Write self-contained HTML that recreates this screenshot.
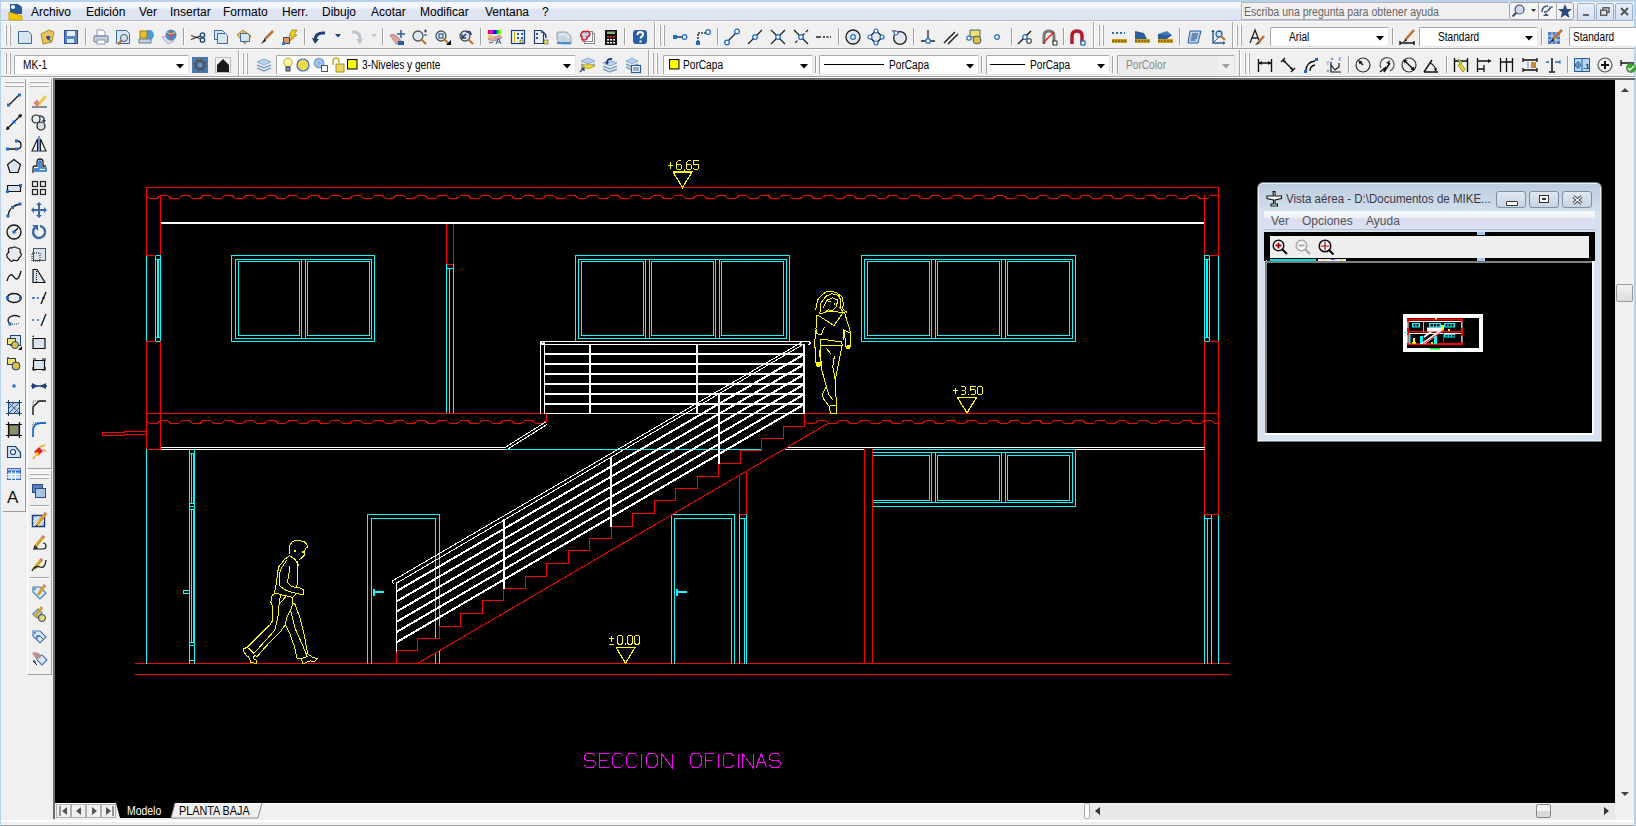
<!DOCTYPE html>
<html><head><meta charset="utf-8"><style>
html,body{margin:0;padding:0;width:1636px;height:826px;overflow:hidden;background:#f0f0f0;font-family:"Liberation Sans", sans-serif;}
#root{position:relative;width:1636px;height:826px;overflow:hidden;}
svg{overflow:visible}
</style></head><body><div id="root">
<div style="position:absolute;left:0px;top:0px;width:1636px;height:2px;background:#b9d1ea"></div><div style="position:absolute;left:0px;top:0px;width:1px;height:826px;background:#b9d1ea"></div><div style="position:absolute;left:1634px;top:0px;width:2px;height:826px;background:#b9d1ea"></div><div style="position:absolute;left:1px;top:2px;width:1633px;height:18px;background:linear-gradient(#f6f8fc 0px,#f1f4fa 6px,#dde3f2 8px,#dfe5f4 18px)"></div><div style="position:absolute;left:1px;top:20px;width:1633px;height:1px;background:#b8c0d4"></div><div style="position:absolute;left:1px;top:21px;width:1633px;height:1px;background:#fbfbfb"></div><svg style="position:absolute;left:9px;top:3px" width="16" height="17" viewBox="0 0 16 17"><path d="M1 1h8l4 3v7H1z" fill="#2a5a98"/><circle cx="4" cy="4" r="2" fill="#fff"/><path d="M0 9l13 4v4H0z" fill="#f2c800" stroke="#d09800" stroke-width=".8"/></svg><div style="position:absolute;left:31px;top:6px;font-size:12px;color:#000;white-space:nowrap;line-height:1;">Archivo</div><div style="position:absolute;left:86px;top:6px;font-size:12px;color:#000;white-space:nowrap;line-height:1;">Edición</div><div style="position:absolute;left:139px;top:6px;font-size:12px;color:#000;white-space:nowrap;line-height:1;">Ver</div><div style="position:absolute;left:170px;top:6px;font-size:12px;color:#000;white-space:nowrap;line-height:1;">Insertar</div><div style="position:absolute;left:223px;top:6px;font-size:12px;color:#000;white-space:nowrap;line-height:1;">Formato</div><div style="position:absolute;left:282px;top:6px;font-size:12px;color:#000;white-space:nowrap;line-height:1;">Herr.</div><div style="position:absolute;left:322px;top:6px;font-size:12px;color:#000;white-space:nowrap;line-height:1;">Dibujo</div><div style="position:absolute;left:371px;top:6px;font-size:12px;color:#000;white-space:nowrap;line-height:1;">Acotar</div><div style="position:absolute;left:420px;top:6px;font-size:12px;color:#000;white-space:nowrap;line-height:1;">Modificar</div><div style="position:absolute;left:485px;top:6px;font-size:12px;color:#000;white-space:nowrap;line-height:1;">Ventana</div><div style="position:absolute;left:542px;top:6px;font-size:12px;color:#000;white-space:nowrap;line-height:1;">?</div><div style="position:absolute;left:1241px;top:2px;width:268px;height:18px;background:#f0f0f0;border:1px solid #b4b4b4;border-right:none;box-sizing:border-box"></div><div style="position:absolute;left:1244px;top:6px;font-size:12px;color:#666;white-space:nowrap;line-height:1;transform:scaleX(0.88);transform-origin:0 0;">Escriba una pregunta para obtener ayuda</div><div style="position:absolute;left:1509px;top:2px;width:65px;height:18px;background:#f4f4f4;border:1px solid #a4a4a4;border-radius:3px;box-sizing:border-box"></div><div style="position:absolute;left:1538px;top:3px;width:1px;height:16px;background:#b0b0b0"></div><div style="position:absolute;left:1556px;top:3px;width:1px;height:16px;background:#b0b0b0"></div><svg style="position:absolute;left:1511px;top:4px" width="14" height="14" viewBox="0 0 14 14"><circle cx="8.5" cy="5.5" r="4.5" fill="#d0d8ec" stroke="#3a5080" stroke-width="1.2"/><path d="M5.5 8.5L1.5 12.5" stroke="#3a5080" stroke-width="2.2"/></svg><svg style="position:absolute;left:1531px;top:9px" width="5" height="3" viewBox="0 0 5 3"><path d="M0 0h5l-2.5 3z" fill="#333"/></svg><svg style="position:absolute;left:1540px;top:4px" width="14" height="14" viewBox="0 0 14 14"><path d="M3 12l3-3 3 3z" fill="#3a5080"/><path d="M2 8q0-6 6-6M4 8q4 0 6-4" stroke="#3a5080" stroke-width="1.5" fill="none"/><path d="M9 3l4 0M9 6l3-3" stroke="#3a5080"/></svg><svg style="position:absolute;left:1558px;top:4px" width="14" height="14" viewBox="0 0 14 14"><path d="M7 0l2 5h5l-4 3.5 1.5 5.5L7 11l-4.5 3L4 8.5 0 5h5z" fill="#2a4a80"/></svg><div style="position:absolute;left:1577px;top:3px;width:18px;height:18px;background:linear-gradient(#e8eef8,#d4dff0);border:1px solid #9eaec4;border-radius:2px;box-sizing:border-box"></div><div style="position:absolute;left:1583px;top:14px;width:6px;height:2px;background:#666"></div><div style="position:absolute;left:1596px;top:3px;width:18px;height:18px;background:linear-gradient(#e8eef8,#d4dff0);border:1px solid #9eaec4;border-radius:2px;box-sizing:border-box"></div><svg style="position:absolute;left:1600px;top:7px" width="10" height="10" viewBox="0 0 10 10"><rect x="3" y="0.8" width="6" height="4.5" fill="none" stroke="#555" stroke-width="1.4"/><rect x="0.7" y="3.2" width="6" height="5" fill="#e0e6f2" stroke="#555" stroke-width="1.4"/></svg><div style="position:absolute;left:1615px;top:3px;width:18px;height:18px;background:linear-gradient(#e8eef8,#d4dff0);border:1px solid #9eaec4;border-radius:2px;box-sizing:border-box"></div><svg style="position:absolute;left:1620px;top:7px" width="9" height="9" viewBox="0 0 9 9"><path d="M1 1l7 7M8 1L1 8" stroke="#555" stroke-width="2"/></svg><div style="position:absolute;left:1px;top:22px;width:1633px;height:27px;background:#f0f0f0"></div><div style="position:absolute;left:1px;top:48px;width:1633px;height:1px;background:#a0a0a0"></div><div style="position:absolute;left:1px;top:49px;width:1633px;height:1px;background:#fbfbfb"></div><div style="position:absolute;left:1px;top:50px;width:1633px;height:27px;background:#f0f0f0"></div><div style="position:absolute;left:1px;top:76px;width:1633px;height:1px;background:#a0a0a0"></div><div style="position:absolute;left:1px;top:77px;width:1633px;height:1px;background:#fbfbfb"></div><div style="position:absolute;left:654px;top:22px;width:1px;height:26px;background:#a8a8a8"></div><div style="position:absolute;left:655px;top:22px;width:1px;height:26px;background:#fff"></div><div style="position:absolute;left:1093px;top:22px;width:1px;height:26px;background:#a8a8a8"></div><div style="position:absolute;left:1094px;top:22px;width:1px;height:26px;background:#fff"></div><div style="position:absolute;left:1232px;top:22px;width:1px;height:26px;background:#a8a8a8"></div><div style="position:absolute;left:1233px;top:22px;width:1px;height:26px;background:#fff"></div><div style="position:absolute;left:5px;top:25px;width:1px;height:21px;background:#ffffff"></div><div style="position:absolute;left:6px;top:25px;width:1px;height:21px;background:#a8a8a8"></div><div style="position:absolute;left:9px;top:25px;width:1px;height:21px;background:#ffffff"></div><div style="position:absolute;left:10px;top:25px;width:1px;height:21px;background:#a8a8a8"></div><div style="position:absolute;left:659px;top:25px;width:1px;height:21px;background:#ffffff"></div><div style="position:absolute;left:660px;top:25px;width:1px;height:21px;background:#a8a8a8"></div><div style="position:absolute;left:663px;top:25px;width:1px;height:21px;background:#ffffff"></div><div style="position:absolute;left:664px;top:25px;width:1px;height:21px;background:#a8a8a8"></div><div style="position:absolute;left:1098px;top:25px;width:1px;height:21px;background:#ffffff"></div><div style="position:absolute;left:1099px;top:25px;width:1px;height:21px;background:#a8a8a8"></div><div style="position:absolute;left:1102px;top:25px;width:1px;height:21px;background:#ffffff"></div><div style="position:absolute;left:1103px;top:25px;width:1px;height:21px;background:#a8a8a8"></div><div style="position:absolute;left:1236px;top:25px;width:1px;height:21px;background:#ffffff"></div><div style="position:absolute;left:1237px;top:25px;width:1px;height:21px;background:#a8a8a8"></div><div style="position:absolute;left:1240px;top:25px;width:1px;height:21px;background:#ffffff"></div><div style="position:absolute;left:1241px;top:25px;width:1px;height:21px;background:#a8a8a8"></div><svg style="position:absolute;left:17px;top:29px" width="16" height="16" viewBox="0 0 16 16"><path d="M1.5 2.5h10l3 3v9h-13z" fill="#d7e6ef" stroke="#3a6aa8"/></svg><svg style="position:absolute;left:40px;top:29px" width="16" height="16" viewBox="0 0 16 16"><path d="M1 5l8-4 5 2-2 10-9 2z" fill="#e8c45a" stroke="#b08a2a"/><path d="M6 8q3-3 5 1l-2 0 2 4-4-3z" fill="#244a86"/></svg><svg style="position:absolute;left:63px;top:29px" width="16" height="16" viewBox="0 0 16 16"><rect x="1.5" y="1.5" width="13" height="13" fill="#5b86c6" stroke="#2a4f90"/><rect x="4" y="2" width="8" height="5" fill="#e8eef8"/><rect x="4" y="10" width="7" height="4" fill="#dde6f2"/></svg><div style="position:absolute;left:85px;top:28px;width:1px;height:17px;background:#a0a0a0"></div><div style="position:absolute;left:86px;top:28px;width:1px;height:17px;background:#ffffff"></div><svg style="position:absolute;left:93px;top:29px" width="16" height="16" viewBox="0 0 16 16"><path d="M4 1h6l2 2v4H4z" fill="#fff" stroke="#8894b0"/><path d="M1 7h14v6H1z" fill="#c8d0e4" stroke="#6d7aa0"/><rect x="4" y="11" width="8" height="4" fill="#fff" stroke="#8894b0"/></svg><svg style="position:absolute;left:115px;top:29px" width="16" height="16" viewBox="0 0 16 16"><path d="M1.5 1.5h10l3 3v10h-13z" fill="#d7e6ef" stroke="#3a6aa8"/><circle cx="9" cy="9" r="3.5" fill="#cfe0f4" stroke="#556"/><path d="M6.5 11.5L3 15.5" stroke="#b07020" stroke-width="2"/></svg><svg style="position:absolute;left:138px;top:29px" width="16" height="16" viewBox="0 0 16 16"><circle cx="11" cy="6" r="5" fill="#4a9ad8"/><path d="M1 10h12v4H1z" fill="#c8d0e4" stroke="#6d7aa0"/><rect x="2" y="2" width="7" height="7" fill="#e0c030" stroke="#a08010"/></svg><svg style="position:absolute;left:161px;top:29px" width="16" height="16" viewBox="0 0 16 16"><path d="M1 8l6 7 6-3-6-5z" fill="#dde" stroke="#aab"/><circle cx="10" cy="6" r="5.5" fill="#3d8fd8"/><path d="M5 6h10M10 1v10" stroke="#e04040" stroke-width="1.2"/><path d="M6 3q4 4 8 0" stroke="#f0d020" fill="none"/></svg><div style="position:absolute;left:183px;top:28px;width:1px;height:17px;background:#a0a0a0"></div><div style="position:absolute;left:184px;top:28px;width:1px;height:17px;background:#ffffff"></div><svg style="position:absolute;left:190px;top:29px" width="16" height="16" viewBox="0 0 16 16"><path d="M1 6.5L10 9.5M1 10.5L10 7" stroke="#333" stroke-width="1.3"/><circle cx="12.5" cy="6" r="2.2" fill="none" stroke="#1f3f77" stroke-width="1.3"/><circle cx="12.5" cy="11" r="2.2" fill="none" stroke="#1f3f77" stroke-width="1.3"/></svg><svg style="position:absolute;left:213px;top:29px" width="16" height="16" viewBox="0 0 16 16"><path d="M1.5 1.5h8l2 2v7h-10z" fill="#d7e6ef" stroke="#3a6aa8"/><path d="M4.5 4.5h8l2 2v8h-10z" fill="#d7e6ef" stroke="#3a6aa8"/></svg><svg style="position:absolute;left:236px;top:29px" width="16" height="16" viewBox="0 0 16 16"><path d="M1 6l6-5 8 6-6 8z" fill="#e8c45a" stroke="#b08a2a"/><path d="M4.5 4.5h7l2 2v6h-9z" fill="#d7e6ef" stroke="#3a6aa8"/></svg><svg style="position:absolute;left:259px;top:29px" width="16" height="16" viewBox="0 0 16 16"><path d="M14 2L6 10" stroke="#c07030" stroke-width="2.5"/><path d="M6 9l-4 6 5-3z" fill="#222"/></svg><svg style="position:absolute;left:282px;top:29px" width="16" height="16" viewBox="0 0 16 16"><path d="M10 1l5 0-3 5h3l-7 6 2-5h-3z" fill="#f0d020" stroke="#806000" stroke-width=".6"/><rect x="1.5" y="8.5" width="6" height="6" fill="#f09050" stroke="#2a4f90"/><rect x="0" y="13" width="3" height="3" fill="#2a7ad8"/></svg><div style="position:absolute;left:304px;top:28px;width:1px;height:17px;background:#a0a0a0"></div><div style="position:absolute;left:305px;top:28px;width:1px;height:17px;background:#ffffff"></div><svg style="position:absolute;left:312px;top:29px" width="16" height="16" viewBox="0 0 16 16"><path d="M3 12q0-9 10-8" fill="none" stroke="#1f3f77" stroke-width="3"/><path d="M0 9l3 6 4-5z" fill="#1f3f77"/></svg><svg style="position:absolute;left:348px;top:29px" width="16" height="16" viewBox="0 0 16 16"><path d="M4 3q9-1 8 9" fill="none" stroke="#bcc4cc" stroke-width="3"/><path d="M8 10l4 5 3-5z" fill="#bcc4cc"/></svg><div style="position:absolute;left:382px;top:28px;width:1px;height:17px;background:#a0a0a0"></div><div style="position:absolute;left:383px;top:28px;width:1px;height:17px;background:#ffffff"></div><svg style="position:absolute;left:389px;top:29px" width="16" height="16" viewBox="0 0 16 16"><path d="M1 6q4-2 8 2l3 4-2 3H7z" fill="#d8a8a0" stroke="#a06060" stroke-width=".6"/><rect x="9" y="12" width="6" height="4" fill="#2a5a9a"/><path d="M12 1v8M8 5h8" stroke="#2a5a9a" stroke-width="1.5"/></svg><svg style="position:absolute;left:412px;top:29px" width="16" height="16" viewBox="0 0 16 16"><circle cx="6" cy="7" r="5" fill="#dbe8f4" stroke="#555" stroke-width="1.3"/><path d="M9 10l5 5" stroke="#c07020" stroke-width="2"/><path d="M12 2h3M13.5 .5v3M12 6h3" stroke="#1f3f77"/></svg><svg style="position:absolute;left:435px;top:29px" width="16" height="16" viewBox="0 0 16 16"><circle cx="6" cy="7" r="5" fill="#dbe8f4" stroke="#555" stroke-width="1.3"/><rect x="4" y="5" width="4" height="4" fill="none" stroke="#1f3f77"/><path d="M9 10l4 4" stroke="#c07020" stroke-width="2"/><path d="M11 16l5-5v5z" fill="#000"/></svg><svg style="position:absolute;left:458px;top:29px" width="16" height="16" viewBox="0 0 16 16"><circle cx="7" cy="7" r="5" fill="#dbe8f4" stroke="#555" stroke-width="1.3"/><path d="M10 10l5 5" stroke="#c07020" stroke-width="2"/><path d="M4 9l4-4M4 5v4h4" stroke="#1f3f77" stroke-width="1.5" fill="none"/><path d="M8 3q5-2 5 3" stroke="#1f3f77" stroke-width="1.5" fill="none"/></svg><div style="position:absolute;left:480px;top:28px;width:1px;height:17px;background:#a0a0a0"></div><div style="position:absolute;left:481px;top:28px;width:1px;height:17px;background:#ffffff"></div><svg style="position:absolute;left:487px;top:29px" width="16" height="16" viewBox="0 0 16 16"><defs><linearGradient id="rbw"><stop offset="0" stop-color="#f00"/><stop offset=".25" stop-color="#f0f"/><stop offset=".5" stop-color="#00f"/><stop offset=".75" stop-color="#0f0"/><stop offset="1" stop-color="#ff0"/></linearGradient></defs><rect x="1" y="1" width="14" height="4" fill="url(#rbw)"/><path d="M1 8h6l6-2 2 3-7 3-6-1z" fill="#d8a8a0" stroke="#906060" stroke-width=".5"/><path d="M2 13q2 2 4 0M9 15l2.5-6 2.5 6M10 13h3" stroke="#2a5a9a" fill="none"/><rect x="1" y="6" width="5" height="3" fill="#e8d070"/></svg><svg style="position:absolute;left:510px;top:29px" width="16" height="16" viewBox="0 0 16 16"><rect x="1.5" y="1.5" width="13" height="13" fill="#eef2f8" stroke="#1f3f77" stroke-width="1.2"/><rect x="4" y="3" width="1" height="10" fill="#c8a800"/><rect x="7" y="4" width="2" height="2" fill="#2a5a9a"/><rect x="11" y="4" width="2" height="2" fill="#2a5a9a"/><rect x="7" y="8" width="2" height="2" fill="#2a5a9a"/><rect x="11" y="8" width="2" height="2" fill="#2a5a9a"/><rect x="10" y="11" width="3" height="3" fill="#f0e040" stroke="#1f3f77" stroke-width=".5"/></svg><svg style="position:absolute;left:533px;top:29px" width="16" height="16" viewBox="0 0 16 16"><path d="M1.5 1.5h7l2 2v11h-9z" fill="#eef2f8" stroke="#1f3f77" stroke-width="1.2"/><rect x="3" y="4" width="2" height="2" fill="#2a5a9a"/><rect x="3" y="8" width="2" height="2" fill="#2a5a9a"/><path d="M8 3q5 0 5 6" stroke="#1f3f77" stroke-width="1.5" fill="none"/><rect x="11" y="11" width="4" height="4" fill="#f0e040" stroke="#1f3f77" stroke-width=".5"/></svg><svg style="position:absolute;left:556px;top:29px" width="16" height="16" viewBox="0 0 16 16"><path d="M1 3h10l4 4v8H5l-4-4z" fill="#c8d4de" stroke="#9aa8b4"/><path d="M3 6q6-3 10 3" stroke="#fff" fill="none"/><path d="M1 14h14" stroke="#4a90c8" stroke-width="2"/></svg><svg style="position:absolute;left:580px;top:29px" width="16" height="16" viewBox="0 0 16 16"><rect x="4.5" y="4.5" width="10" height="10" fill="#fff" stroke="#888"/><rect x="2.5" y="2.5" width="10" height="10" fill="#fff" stroke="#888"/><path d="M1 5q2-4 5-2 3-2 4 2-1 3-3 3 1 3-3 3-3 0-2-3-2-1-1-3z" fill="#b8d0ec" stroke="#e02020" stroke-width="1.5"/></svg><svg style="position:absolute;left:603px;top:29px" width="16" height="16" viewBox="0 0 16 16"><rect x="2" y="1" width="12" height="15" fill="#111"/><rect x="4" y="2.5" width="8" height="2.5" fill="#8ab07a"/><g fill="#fff"><rect x="4" y="7" width="2" height="1.5" fill="#e33"/><rect x="7" y="7" width="2" height="1.5" fill="#e33"/><rect x="10" y="7" width="2" height="1.5" fill="#e33"/><rect x="4" y="10" width="2" height="1.5"/><rect x="7" y="10" width="2" height="1.5"/><rect x="10" y="10" width="2" height="1.5"/><rect x="4" y="13" width="2" height="1.5"/><rect x="7" y="13" width="2" height="1.5"/><rect x="10" y="13" width="2" height="1.5"/></g></svg><div style="position:absolute;left:624px;top:28px;width:1px;height:17px;background:#a0a0a0"></div><div style="position:absolute;left:625px;top:28px;width:1px;height:17px;background:#ffffff"></div><svg style="position:absolute;left:632px;top:29px" width="16" height="16" viewBox="0 0 16 16"><rect x="1" y="1" width="14" height="14" rx="3" fill="#2a5fa8"/><path d="M5.5 6q0-3 2.7-3 2.8 0 2.8 2.5c0 2-2.5 2-2.5 4" stroke="#fff" stroke-width="2" fill="none"/><rect x="7.5" y="11.5" width="2" height="2" fill="#fff"/></svg><svg style="position:absolute;left:672px;top:29px" width="16" height="16" viewBox="0 0 16 16"><path d="M2 8h10" stroke="#333" stroke-width="1.5"/><rect x="1" y="6" width="4" height="4" fill="#1e6cc8"/><circle cx="12.5" cy="8" r="2.3" fill="#fff" stroke="#1e6cc8" stroke-width="1.3"/></svg><svg style="position:absolute;left:695px;top:29px" width="16" height="16" viewBox="0 0 16 16"><path d="M3 13V4h9" stroke="#333" stroke-width="1.5" stroke-dasharray="2 1" fill="none"/><rect x="1" y="12" width="4" height="4" fill="#1e6cc8"/><circle cx="13" cy="3" r="2.3" fill="#fff" stroke="#1e6cc8" stroke-width="1.3"/></svg><div style="position:absolute;left:717px;top:28px;width:1px;height:17px;background:#a0a0a0"></div><div style="position:absolute;left:718px;top:28px;width:1px;height:17px;background:#ffffff"></div><svg style="position:absolute;left:724px;top:29px" width="16" height="16" viewBox="0 0 16 16"><path d="M3 13L13 3" stroke="#222" stroke-width="1.3"/><circle cx="13" cy="2.5" r="2.3" fill="#fff" stroke="#1e6cc8" stroke-width="1.3"/><circle cx="3" cy="13.5" r="2.3" fill="#fff" stroke="#1e6cc8" stroke-width="1.3"/></svg><svg style="position:absolute;left:747px;top:29px" width="16" height="16" viewBox="0 0 16 16"><path d="M1 15L15 1" stroke="#222" stroke-width="1.3"/><circle cx="8" cy="8" r="2.3" fill="#fff" stroke="#1e6cc8" stroke-width="1.3"/></svg><svg style="position:absolute;left:770px;top:29px" width="16" height="16" viewBox="0 0 16 16"><path d="M1 1L15 15M15 1L1 15" stroke="#222" stroke-width="1.3"/><circle cx="8" cy="8" r="2.3" fill="#fff" stroke="#1e6cc8" stroke-width="1.3"/></svg><svg style="position:absolute;left:793px;top:29px" width="16" height="16" viewBox="0 0 16 16"><path d="M1 1L15 15" stroke="#222" stroke-width="1.3"/><path d="M15 1L1 15" stroke="#222" stroke-width="1.3" stroke-dasharray="3 2"/><circle cx="8" cy="8" r="2.3" fill="#fff" stroke="#1e6cc8" stroke-width="1.3"/></svg><svg style="position:absolute;left:815px;top:29px" width="16" height="16" viewBox="0 0 16 16"><path d="M1 8h5" stroke="#222" stroke-width="1.5"/><path d="M8 8h8" stroke="#222" stroke-width="1.5" stroke-dasharray="2 1.5"/></svg><div style="position:absolute;left:838px;top:28px;width:1px;height:17px;background:#a0a0a0"></div><div style="position:absolute;left:839px;top:28px;width:1px;height:17px;background:#ffffff"></div><svg style="position:absolute;left:845px;top:29px" width="16" height="16" viewBox="0 0 16 16"><circle cx="8" cy="8" r="7" fill="#e2e8f0" stroke="#222" stroke-width="1.3"/><circle cx="8" cy="8" r="2.3" fill="#fff" stroke="#1e6cc8" stroke-width="1.3"/></svg><svg style="position:absolute;left:868px;top:29px" width="16" height="16" viewBox="0 0 16 16"><path d="M8 1.5L14.5 8 8 14.5 1.5 8z" fill="#e2e8f0" stroke="#222" stroke-width="1.3"/><g fill="#fff" stroke="#1e6cc8" stroke-width="1.2"><circle cx="8" cy="2" r="2"/><circle cx="2" cy="8" r="2"/><circle cx="14" cy="8" r="2"/><circle cx="8" cy="14" r="2"/></g></svg><svg style="position:absolute;left:891px;top:29px" width="16" height="16" viewBox="0 0 16 16"><circle cx="9" cy="9" r="6.3" fill="#e2e8f0" stroke="#222" stroke-width="1.3"/><path d="M1 2l4 0" stroke="#222"/><circle cx="5" cy="4" r="2" fill="#fff" stroke="#1e6cc8" stroke-width="1.2"/></svg><div style="position:absolute;left:913px;top:28px;width:1px;height:17px;background:#a0a0a0"></div><div style="position:absolute;left:914px;top:28px;width:1px;height:17px;background:#ffffff"></div><svg style="position:absolute;left:920px;top:29px" width="16" height="16" viewBox="0 0 16 16"><path d="M1 12h14M8 1v11" stroke="#222" stroke-width="1.3"/><circle cx="8" cy="12" r="2.3" fill="#fff" stroke="#1e6cc8" stroke-width="1.3"/></svg><svg style="position:absolute;left:943px;top:29px" width="16" height="16" viewBox="0 0 16 16"><path d="M1 14L12 3M5 15L15 5" stroke="#222" stroke-width="1.5"/></svg><svg style="position:absolute;left:966px;top:29px" width="16" height="16" viewBox="0 0 16 16"><path d="M4 1h10v7H4z" fill="#f0e070" stroke="#1f3f77" stroke-width=".8"/><circle cx="11" cy="11" r="4" fill="#e0c040" stroke="#1f3f77" stroke-width=".8"/><circle cx="3" cy="9" r="2.2" fill="#fff" stroke="#1e6cc8" stroke-width="1.2"/></svg><svg style="position:absolute;left:989px;top:29px" width="16" height="16" viewBox="0 0 16 16"><circle cx="8" cy="8" r="2.3" fill="#fff" stroke="#1e6cc8" stroke-width="1.3"/></svg><div style="position:absolute;left:1011px;top:28px;width:1px;height:17px;background:#a0a0a0"></div><div style="position:absolute;left:1012px;top:28px;width:1px;height:17px;background:#ffffff"></div><svg style="position:absolute;left:1017px;top:29px" width="16" height="16" viewBox="0 0 16 16"><path d="M1 15L14 2" stroke="#222" stroke-width="1.5"/><circle cx="8" cy="8" r="2.3" fill="#fff" stroke="#1e6cc8" stroke-width="1.3"/><circle cx="12" cy="12" r="2.3" fill="#fff" stroke="#555" stroke-width="1.3"/></svg><svg style="position:absolute;left:1041px;top:29px" width="16" height="16" viewBox="0 0 16 16"><path d="M3 15V7q0-5 5-5t5 5v8" stroke="#777" stroke-width="3" fill="none"/><path d="M2 14L13 3" stroke="#e02020" stroke-width="1.5"/><rect x="12" y="12" width="4" height="4" fill="#fff" stroke="#333"/></svg><div style="position:absolute;left:1063px;top:28px;width:1px;height:17px;background:#a0a0a0"></div><div style="position:absolute;left:1064px;top:28px;width:1px;height:17px;background:#ffffff"></div><svg style="position:absolute;left:1069px;top:29px" width="16" height="16" viewBox="0 0 16 16"><path d="M3 15V7q0-5 5-5t5 5v8" stroke="#b01c2c" stroke-width="3.5" fill="none"/><rect x="12" y="12" width="4" height="4" fill="#fff" stroke="#1e6cc8" stroke-width="1.2"/></svg><svg style="position:absolute;left:1111px;top:29px" width="16" height="16" viewBox="0 0 16 16"><path d="M1 4h13" stroke="#1e6cc8" stroke-width="2" stroke-dasharray="2 2"/><rect x="1" y="10" width="15" height="4" fill="#c8a018"/><path d="M2 11v2M5 11v2M8 11v2M11 11v2M14 11v2" stroke="#604000"/></svg><svg style="position:absolute;left:1134px;top:29px" width="16" height="16" viewBox="0 0 16 16"><path d="M1 2l9 2 3 6H1z" fill="#2a5f9a"/><rect x="1" y="10" width="15" height="4" fill="#c8a018"/><path d="M2 11v2M5 11v2M8 11v2M11 11v2M14 11v2" stroke="#604000"/></svg><svg style="position:absolute;left:1157px;top:29px" width="16" height="16" viewBox="0 0 16 16"><path d="M1 5l9-3 5 4-5 3H1z" fill="#4a80c0"/><path d="M1 5v5h9l5-4" fill="#2a5f9a"/><rect x="1" y="10" width="15" height="4" fill="#c8a018"/><path d="M2 11v2M5 11v2M8 11v2M11 11v2M14 11v2" stroke="#604000"/></svg><div style="position:absolute;left:1179px;top:28px;width:1px;height:17px;background:#a0a0a0"></div><div style="position:absolute;left:1180px;top:28px;width:1px;height:17px;background:#ffffff"></div><svg style="position:absolute;left:1187px;top:29px" width="16" height="16" viewBox="0 0 16 16"><path d="M3 2h11l-3 12H1z" fill="#b8d4f0" stroke="#2a5f9a"/><path d="M5 5h6M4.5 7h6M4 9h6M3.5 11h5" stroke="#1f3f77"/></svg><svg style="position:absolute;left:1210px;top:29px" width="16" height="16" viewBox="0 0 16 16"><path d="M3 1v13h12" stroke="#2a5f9a" stroke-width="1.5" fill="none"/><path d="M1 3l2-2 2 2M13 12l2 2-2 2" fill="#2a5f9a"/><circle cx="9" cy="5" r="3" fill="#d0e0f0" stroke="#2a5f9a" stroke-width="1.3"/><path d="M11 7l4 4" stroke="#c07020" stroke-width="2"/><path d="M3 14L9 8" stroke="#2a5f9a"/></svg><svg style="position:absolute;left:335px;top:34px" width="6" height="4" viewBox="0 0 6 4"><path d="M0 0h6l-3 3.5z" fill="#1f3f77"/></svg><svg style="position:absolute;left:371px;top:34px" width="6" height="4" viewBox="0 0 6 4"><path d="M0 0h6l-3 3.5z" fill="#c0c8d0"/></svg><svg style="position:absolute;left:1249px;top:29px" width="16" height="16" viewBox="0 0 16 16"><path d="M1 14L6 1l5 13M3 9h6" stroke="#222" stroke-width="1.3" fill="none"/><path d="M15 7l-6 7" stroke="#c07030" stroke-width="2.5"/><path d="M9 13l-3 3 4-1z" fill="#222"/></svg><div style="position:absolute;left:1270px;top:27px;width:119px;height:20px;background:#fff;border:1px solid #a8a8a8;border-radius:2px;box-sizing:border-box;border-bottom-color:#e4e4e4;border-right-color:#e4e4e4"></div><svg style="position:absolute;left:1376px;top:36px" width="8" height="5" viewBox="0 0 8 5"><path d="M0 0h8l-4 4.5z" fill="#000"/></svg><div style="position:absolute;left:1289px;top:31px;font-size:12px;color:#000;white-space:nowrap;line-height:1;transform:scaleX(0.845);transform-origin:0 0;">Arial</div><div style="position:absolute;left:1392px;top:28px;width:1px;height:17px;background:#a0a0a0"></div><div style="position:absolute;left:1393px;top:28px;width:1px;height:17px;background:#ffffff"></div><svg style="position:absolute;left:1399px;top:29px" width="16" height="16" viewBox="0 0 16 16"><path d="M15 1L7 10" stroke="#c07030" stroke-width="2.5"/><path d="M7 9l-3 4 4-1z" fill="#222"/><path d="M1 14h14M1 12v4M15 12v4" stroke="#111" stroke-width="1.4"/></svg><div style="position:absolute;left:1419px;top:27px;width:119px;height:20px;background:#fff;border:1px solid #a8a8a8;border-radius:2px;box-sizing:border-box;border-bottom-color:#e4e4e4;border-right-color:#e4e4e4"></div><svg style="position:absolute;left:1525px;top:36px" width="8" height="5" viewBox="0 0 8 5"><path d="M0 0h8l-4 4.5z" fill="#000"/></svg><div style="position:absolute;left:1438px;top:31px;font-size:12px;color:#000;white-space:nowrap;line-height:1;transform:scaleX(0.845);transform-origin:0 0;">Standard</div><div style="position:absolute;left:1541px;top:28px;width:1px;height:17px;background:#a0a0a0"></div><div style="position:absolute;left:1542px;top:28px;width:1px;height:17px;background:#ffffff"></div><svg style="position:absolute;left:1547px;top:29px" width="16" height="16" viewBox="0 0 16 16"><rect x="1" y="3" width="12" height="12" fill="#4a80c8"/><path d="M1 7h12M1 11h12M5 3v12M9 3v12" stroke="#cfe0f4"/><path d="M15 1L6 10" stroke="#c07030" stroke-width="2.5"/><path d="M6 9l-3 4 4-1z" fill="#222"/></svg><div style="position:absolute;left:1569px;top:27px;width:71px;height:20px;background:#fff;border:1px solid #a8a8a8;border-radius:2px;box-sizing:border-box;border-bottom-color:#e4e4e4;border-right-color:#e4e4e4"></div><div style="position:absolute;left:1573px;top:31px;font-size:12px;color:#000;white-space:nowrap;line-height:1;transform:scaleX(0.845);transform-origin:0 0;">Standard</div><div style="position:absolute;left:238px;top:50px;width:1px;height:26px;background:#a8a8a8"></div><div style="position:absolute;left:239px;top:50px;width:1px;height:26px;background:#fff"></div><div style="position:absolute;left:648px;top:50px;width:1px;height:26px;background:#a8a8a8"></div><div style="position:absolute;left:649px;top:50px;width:1px;height:26px;background:#fff"></div><div style="position:absolute;left:1239px;top:50px;width:1px;height:26px;background:#a8a8a8"></div><div style="position:absolute;left:1240px;top:50px;width:1px;height:26px;background:#fff"></div><div style="position:absolute;left:5px;top:53px;width:1px;height:21px;background:#ffffff"></div><div style="position:absolute;left:6px;top:53px;width:1px;height:21px;background:#a8a8a8"></div><div style="position:absolute;left:9px;top:53px;width:1px;height:21px;background:#ffffff"></div><div style="position:absolute;left:10px;top:53px;width:1px;height:21px;background:#a8a8a8"></div><div style="position:absolute;left:242px;top:53px;width:1px;height:21px;background:#ffffff"></div><div style="position:absolute;left:243px;top:53px;width:1px;height:21px;background:#a8a8a8"></div><div style="position:absolute;left:246px;top:53px;width:1px;height:21px;background:#ffffff"></div><div style="position:absolute;left:247px;top:53px;width:1px;height:21px;background:#a8a8a8"></div><div style="position:absolute;left:652px;top:53px;width:1px;height:21px;background:#ffffff"></div><div style="position:absolute;left:653px;top:53px;width:1px;height:21px;background:#a8a8a8"></div><div style="position:absolute;left:656px;top:53px;width:1px;height:21px;background:#ffffff"></div><div style="position:absolute;left:657px;top:53px;width:1px;height:21px;background:#a8a8a8"></div><div style="position:absolute;left:1244px;top:53px;width:1px;height:21px;background:#ffffff"></div><div style="position:absolute;left:1245px;top:53px;width:1px;height:21px;background:#a8a8a8"></div><div style="position:absolute;left:1248px;top:53px;width:1px;height:21px;background:#ffffff"></div><div style="position:absolute;left:1249px;top:53px;width:1px;height:21px;background:#a8a8a8"></div><div style="position:absolute;left:14px;top:55px;width:175px;height:20px;background:#fff;border:1px solid #a8a8a8;border-radius:2px;box-sizing:border-box;border-bottom-color:#e4e4e4;border-right-color:#e4e4e4"></div><svg style="position:absolute;left:176px;top:64px" width="8" height="5" viewBox="0 0 8 5"><path d="M0 0h8l-4 4.5z" fill="#000"/></svg><div style="position:absolute;left:23px;top:59px;font-size:12px;color:#000;white-space:nowrap;line-height:1;transform:scaleX(0.845);transform-origin:0 0;">MK-1</div><svg style="position:absolute;left:192px;top:57px" width="16" height="16" viewBox="0 0 16 16"><rect x="0" y="0" width="16" height="16" fill="#4a7ab0"/><circle cx="8" cy="8" r="5" fill="none" stroke="#555" stroke-width="3" stroke-dasharray="2.2 1.7"/><circle cx="8" cy="8" r="4" fill="none" stroke="#555" stroke-width="2"/><circle cx="8" cy="8" r="2" fill="#6a9ad0"/></svg><svg style="position:absolute;left:215px;top:57px" width="16" height="16" viewBox="0 0 16 16"><rect x=".5" y=".5" width="15" height="15" fill="none" stroke="#888" stroke-dasharray="1 1"/><path d="M2 8l6-6 6 6v7H2z" fill="#1a1a1a"/></svg><svg style="position:absolute;left:256px;top:57px" width="16" height="16" viewBox="0 0 16 16"><path d="M1 5l7-3 7 3-7 3z" fill="#b8d0ec" stroke="#7fa0c8" stroke-width=".8"/><path d="M1 8l7 3 7-3M1 11l7 3 7-3" stroke="#7fa0c8" stroke-width="1.4" fill="none"/></svg><div style="position:absolute;left:276px;top:55px;width:300px;height:20px;background:#fff;border:1px solid #a8a8a8;border-radius:2px;box-sizing:border-box;border-bottom-color:#e4e4e4;border-right-color:#e4e4e4"></div><svg style="position:absolute;left:563px;top:64px" width="8" height="5" viewBox="0 0 8 5"><path d="M0 0h8l-4 4.5z" fill="#000"/></svg><svg style="position:absolute;left:283px;top:57px" width="12" height="16" viewBox="0 0 12 16"><circle cx="5" cy="5.5" r="4.2" fill="#fff8a0" stroke="#b8a020" stroke-width="1"/><rect x="3" y="10" width="4" height="4" fill="#9098c0" stroke="#334"/></svg><svg style="position:absolute;left:296px;top:57px" width="16" height="16" viewBox="0 0 16 16"><circle cx="7" cy="8" r="6" fill="#f0d848" stroke="#2a6ad0" stroke-width="1.2"/></svg><svg style="position:absolute;left:313px;top:57px" width="16" height="16" viewBox="0 0 16 16"><circle cx="6" cy="6" r="5.5" fill="#8ab0e0"/><circle cx="6" cy="6" r="2.5" fill="none" stroke="#c8dcf4"/><rect x="8.5" y="8.5" width="6" height="6" fill="#fff" stroke="#555"/></svg><svg style="position:absolute;left:330px;top:57px" width="16" height="16" viewBox="0 0 16 16"><path d="M3 8V4q0-3 3-3t3 3v2" stroke="#c8b020" stroke-width="1.6" fill="none"/><rect x="6" y="7" width="8" height="8" fill="#e8d860" stroke="#a89020"/></svg><svg style="position:absolute;left:347px;top:59px" width="11" height="11" viewBox="0 0 10.5 10.5"><rect x=".5" y=".5" width="9" height="9" fill="#ffff00" stroke="#000"/></svg><div style="position:absolute;left:362px;top:59px;font-size:12px;color:#000;white-space:nowrap;line-height:1;transform:scaleX(0.845);transform-origin:0 0;">3-Niveles y gente</div><svg style="position:absolute;left:579px;top:57px" width="16" height="16" viewBox="0 0 16 16"><path d="M2 4l7-3 7 3-7 3z" fill="#b8d0ec" stroke="#7fa0c8" stroke-width=".8"/><path d="M2 7l7 3 7-3" stroke="#7fa0c8" stroke-width="1.4" fill="none"/><path d="M2 9l7 3 7-3-7-2z" fill="#e8d840" stroke="#b8a020" stroke-width=".8"/><path d="M1 15l4-4M2 11h3v3" stroke="#1f3f77" stroke-width="1.2" fill="none"/></svg><svg style="position:absolute;left:602px;top:57px" width="16" height="16" viewBox="0 0 16 16"><path d="M1 6l7-3 7 3-7 3z" fill="#b8d0ec" stroke="#7fa0c8" stroke-width=".8"/><path d="M1 9l7 3 7-3M1 12l7 3 7-3" stroke="#7fa0c8" stroke-width="1.4" fill="none"/><path d="M5 6q0-5 5-4" stroke="#1f3f77" stroke-width="1.8" fill="none"/><path d="M3 5l2 3 2-3z" fill="#1f3f77"/></svg><svg style="position:absolute;left:625px;top:57px" width="16" height="16" viewBox="0 0 16 16"><path d="M1 4l6-3 6 3-6 3z" fill="#b8d0ec" stroke="#7fa0c8" stroke-width=".8"/><path d="M1 7l6 3 6-3M1 10l6 3 6-3" stroke="#7fa0c8" stroke-width="1.4" fill="none"/><rect x="6.5" y="8.5" width="9" height="7" fill="#fff" stroke="#2a5f9a" stroke-width="1.2"/><path d="M8 11h6M8 13h6" stroke="#2a5f9a"/></svg><div style="position:absolute;left:663px;top:55px;width:150px;height:20px;background:#fff;border:1px solid #a8a8a8;border-radius:2px;box-sizing:border-box;border-bottom-color:#e4e4e4;border-right-color:#e4e4e4"></div><svg style="position:absolute;left:800px;top:64px" width="8" height="5" viewBox="0 0 8 5"><path d="M0 0h8l-4 4.5z" fill="#000"/></svg><svg style="position:absolute;left:669px;top:59px" width="11" height="11" viewBox="0 0 10.5 10.5"><rect x=".5" y=".5" width="9" height="9" fill="#ffff00" stroke="#000"/></svg><div style="position:absolute;left:683px;top:59px;font-size:12px;color:#000;white-space:nowrap;line-height:1;transform:scaleX(0.845);transform-origin:0 0;">PorCapa</div><div style="position:absolute;left:815px;top:56px;width:1px;height:17px;background:#a0a0a0"></div><div style="position:absolute;left:816px;top:56px;width:1px;height:17px;background:#ffffff"></div><div style="position:absolute;left:819px;top:55px;width:160px;height:20px;background:#fff;border:1px solid #a8a8a8;border-radius:2px;box-sizing:border-box;border-bottom-color:#e4e4e4;border-right-color:#e4e4e4"></div><svg style="position:absolute;left:966px;top:64px" width="8" height="5" viewBox="0 0 8 5"><path d="M0 0h8l-4 4.5z" fill="#000"/></svg><div style="position:absolute;left:824px;top:64px;width:60px;height:1px;background:#000"></div><div style="position:absolute;left:889px;top:59px;font-size:12px;color:#000;white-space:nowrap;line-height:1;transform:scaleX(0.845);transform-origin:0 0;">PorCapa</div><div style="position:absolute;left:981px;top:56px;width:1px;height:17px;background:#a0a0a0"></div><div style="position:absolute;left:982px;top:56px;width:1px;height:17px;background:#ffffff"></div><div style="position:absolute;left:986px;top:55px;width:124px;height:20px;background:#fff;border:1px solid #a8a8a8;border-radius:2px;box-sizing:border-box;border-bottom-color:#e4e4e4;border-right-color:#e4e4e4"></div><svg style="position:absolute;left:1097px;top:64px" width="8" height="5" viewBox="0 0 8 5"><path d="M0 0h8l-4 4.5z" fill="#000"/></svg><div style="position:absolute;left:990px;top:64px;width:35px;height:1px;background:#000"></div><div style="position:absolute;left:1030px;top:59px;font-size:12px;color:#000;white-space:nowrap;line-height:1;transform:scaleX(0.845);transform-origin:0 0;">PorCapa</div><div style="position:absolute;left:1112px;top:56px;width:1px;height:17px;background:#a0a0a0"></div><div style="position:absolute;left:1113px;top:56px;width:1px;height:17px;background:#ffffff"></div><div style="position:absolute;left:1117px;top:55px;width:118px;height:20px;background:#f0f0f0;border:1px solid #a8a8a8;border-radius:2px;box-sizing:border-box;border-bottom-color:#e4e4e4;border-right-color:#e4e4e4"></div><svg style="position:absolute;left:1222px;top:64px" width="8" height="5" viewBox="0 0 8 5"><path d="M0 0h8l-4 4.5z" fill="#a0a0a0"/></svg><div style="position:absolute;left:1118px;top:56px;width:100px;height:18px;background:#ececec"></div><div style="position:absolute;left:1126px;top:59px;font-size:12px;color:#888;white-space:nowrap;line-height:1;transform:scaleX(0.845);transform-origin:0 0;">PorColor</div><svg style="position:absolute;left:1257px;top:57px" width="16" height="16" viewBox="0 0 16 16"><path d="M1.5 2v13M14.5 2v13M2 6h12" stroke="#111" stroke-width="1.4"/><path d="M2 6l3-2v4zM14 6l-3-2v4z" fill="#111"/></svg><svg style="position:absolute;left:1280px;top:57px" width="16" height="16" viewBox="0 0 16 16"><path d="M1 5l4-4M11 15l4-4M3 3l10 10" stroke="#111" stroke-width="1.4"/><path d="M3 3l3 1-2 2zM13 13l-3-1 2-2z" fill="#111"/></svg><svg style="position:absolute;left:1303px;top:57px" width="16" height="16" viewBox="0 0 16 16"><path d="M3 14q0-9 9-10" stroke="#111" stroke-width="1.4" fill="none"/><path d="M7 14q0-5 5-6" stroke="#111" stroke-width="1.4" fill="none"/><rect x="1" y="13" width="3" height="3" fill="#1e6cc8"/><rect x="12" y="1" width="3" height="3" fill="#1e6cc8"/></svg><svg style="position:absolute;left:1326px;top:57px" width="16" height="16" viewBox="0 0 16 16"><path d="M5 5v10h10M5 8l4 5 4-3v-4" stroke="#111" stroke-width="1.2" fill="none"/><text x="0" y="8" font-size="5" fill="#1e6cc8">Y</text><text x="12" y="4" font-size="5" fill="#1e6cc8">X</text><circle cx="6" cy="2" r="1" fill="none" stroke="#1e6cc8" stroke-width=".6"/><circle cx="2" cy="14" r="1" fill="none" stroke="#1e6cc8" stroke-width=".6"/></svg><div style="position:absolute;left:1348px;top:56px;width:1px;height:17px;background:#a0a0a0"></div><div style="position:absolute;left:1349px;top:56px;width:1px;height:17px;background:#ffffff"></div><svg style="position:absolute;left:1355px;top:57px" width="16" height="16" viewBox="0 0 16 16"><circle cx="8" cy="8" r="7" fill="none" stroke="#333" stroke-width="1.2"/><path d="M8 8L4 4" stroke="#111" stroke-width="1.4"/><path d="M3.5 3.5l4 1-3 3z" fill="#111"/></svg><svg style="position:absolute;left:1378px;top:57px" width="16" height="16" viewBox="0 0 16 16"><path d="M3 11A7 7 0 1 1 12 14" stroke="#555" stroke-width="1.2" fill="none"/><path d="M2 15l5-4-1 4 6-9" stroke="#111" stroke-width="1.5" fill="none"/><path d="M12 3l-1 4-3-1z" fill="#111"/></svg><svg style="position:absolute;left:1401px;top:57px" width="16" height="16" viewBox="0 0 16 16"><circle cx="8" cy="8" r="7" fill="none" stroke="#333" stroke-width="1.2"/><path d="M3 3l10 10" stroke="#111" stroke-width="1.4"/><path d="M2.5 2.5l4 1-3 3zM13.5 13.5l-4-1 3-3z" fill="#111"/></svg><svg style="position:absolute;left:1423px;top:57px" width="16" height="16" viewBox="0 0 16 16"><path d="M1 15h14M1 15L9 3" stroke="#111" stroke-width="1.4"/><path d="M7 6q5 2 6 8" stroke="#111" stroke-width="1.1" fill="none"/><path d="M11 12l2 3 1-4z" fill="#111"/></svg><div style="position:absolute;left:1446px;top:56px;width:1px;height:17px;background:#a0a0a0"></div><div style="position:absolute;left:1447px;top:56px;width:1px;height:17px;background:#ffffff"></div><svg style="position:absolute;left:1453px;top:57px" width="16" height="16" viewBox="0 0 16 16"><path d="M1.5 1v14M14.5 1v14M2 4h12" stroke="#111" stroke-width="1.4"/><path d="M5 2l4 3-1 2 4 5-2 3-5-7 2-1z" fill="#f0d020" stroke="#6a8020" stroke-width=".7"/></svg><svg style="position:absolute;left:1476px;top:57px" width="16" height="16" viewBox="0 0 16 16"><path d="M1.5 1v14M8 8v7M1 4h14M1 12h7" stroke="#111" stroke-width="1.3"/><path d="M15 4l-3-2v4z" fill="#111"/></svg><svg style="position:absolute;left:1499px;top:57px" width="16" height="16" viewBox="0 0 16 16"><path d="M1.5 1v14M7.5 1v14M13.5 1v14M1 5h13" stroke="#111" stroke-width="1.3"/></svg><svg style="position:absolute;left:1522px;top:57px" width="16" height="16" viewBox="0 0 16 16"><path d="M1 3h14M1 13h14M1 1v4M15 1v4M1 11v4M15 11v4" stroke="#111" stroke-width="1.3"/><rect x="9" y="5" width="5" height="6" fill="#c88a30"/><path d="M6 5v6" stroke="#1e6cc8" stroke-width="1.3" stroke-dasharray="1.5 1"/></svg><svg style="position:absolute;left:1545px;top:57px" width="16" height="16" viewBox="0 0 16 16"><path d="M7 1v13M4 15h6" stroke="#111" stroke-width="1.5"/><path d="M1 5h3M10 5h5" stroke="#1e6cc8" stroke-width="1.4"/><path d="M15 3v4" stroke="#1e6cc8"/></svg><div style="position:absolute;left:1567px;top:56px;width:1px;height:17px;background:#a0a0a0"></div><div style="position:absolute;left:1568px;top:56px;width:1px;height:17px;background:#ffffff"></div><svg style="position:absolute;left:1574px;top:57px" width="16" height="16" viewBox="0 0 16 16"><rect x="0.5" y="1.5" width="15" height="13" fill="#b8d4ee" stroke="#2a5f9a"/><path d="M8 2v12" stroke="#2a5f9a"/><circle cx="4" cy="8" r="2.5" fill="none" stroke="#2a5f9a"/><path d="M4 4v8M1 8h6" stroke="#2a5f9a" stroke-width=".8"/><text x="9" y="12" font-size="8" fill="#1f3f77" font-weight="bold">.1</text></svg><svg style="position:absolute;left:1597px;top:57px" width="16" height="16" viewBox="0 0 16 16"><circle cx="8" cy="8" r="7" fill="none" stroke="#555" stroke-width="1.2"/><path d="M8 4v8M4 8h8" stroke="#111" stroke-width="2"/></svg><svg style="position:absolute;left:1620px;top:57px" width="16" height="16" viewBox="0 0 16 16"><path d="M1 6h13M1 3v6" stroke="#111" stroke-width="1.3"/><circle cx="11" cy="11" r="5" fill="#3aa030"/><path d="M8 11l2 2 4-4" stroke="#fff" stroke-width="1.5" fill="none"/></svg><div style="position:absolute;left:1px;top:78px;width:53px;height:748px;background:#f0f0f0"></div><div style="position:absolute;left:3px;top:79px;width:23px;height:433px;border-right:1px solid #a0a0a0;border-bottom:1px solid #a0a0a0;box-sizing:border-box"></div><div style="position:absolute;left:5px;top:81px;width:19px;height:1px;background:#ffffff"></div><div style="position:absolute;left:5px;top:82px;width:19px;height:1px;background:#a8a8a8"></div><div style="position:absolute;left:5px;top:85px;width:19px;height:1px;background:#ffffff"></div><div style="position:absolute;left:5px;top:86px;width:19px;height:1px;background:#a8a8a8"></div><svg style="position:absolute;left:6px;top:92px" width="16" height="16" viewBox="0 0 16 16"><path d="M3 13L13 3" stroke="#111" stroke-width="1.3"/><rect x="1" y="11.5" width="3" height="3" fill="#1e6cc8"/><rect x="12" y="1.5" width="3" height="3" fill="#1e6cc8"/></svg><svg style="position:absolute;left:6px;top:114px" width="16" height="16" viewBox="0 0 16 16"><path d="M1 15L15 1" stroke="#111" stroke-width="1.3"/><path d="M0 16l1-4 3 3zM16 0l-4 1 3 3z" fill="#111"/><rect x="6.5" y="6.5" width="3" height="3" fill="#1e6cc8"/></svg><svg style="position:absolute;left:6px;top:136px" width="16" height="16" viewBox="0 0 16 16"><path d="M2 13h9q4 0 4-4t-4-4" stroke="#111" stroke-width="1.3" fill="none"/><rect x="0" y="11.5" width="3" height="3" fill="#1e6cc8"/><rect x="9" y="11.5" width="3" height="3" fill="#1e6cc8"/><rect x="9" y="3.5" width="3" height="3" fill="#1e6cc8"/></svg><svg style="position:absolute;left:6px;top:158px" width="16" height="16" viewBox="0 0 16 16"><path d="M8 1.5L14.5 6.5 12 14.5H4L1.5 6.5z" fill="#d8e4f0" stroke="#111" stroke-width="1.2"/></svg><svg style="position:absolute;left:6px;top:180px" width="16" height="16" viewBox="0 0 16 16"><path d="M1.5 5.5h13v6h-13z" fill="#d8e4f0" stroke="#111" stroke-width="1.2"/><rect x="0" y="10" width="3" height="3" fill="#1e6cc8"/><rect x="13" y="4" width="3" height="3" fill="#1e6cc8"/></svg><svg style="position:absolute;left:6px;top:202px" width="16" height="16" viewBox="0 0 16 16"><path d="M2 14q1-10 12-12" stroke="#111" stroke-width="1.3" fill="none"/><rect x="0.5" y="12.5" width="3" height="3" fill="#1e6cc8"/><rect x="5" y="4" width="3" height="3" fill="#1e6cc8"/><rect x="12.5" y="0.5" width="3" height="3" fill="#1e6cc8"/></svg><svg style="position:absolute;left:6px;top:224px" width="16" height="16" viewBox="0 0 16 16"><circle cx="8" cy="8" r="7" fill="#e8ecf2" stroke="#111" stroke-width="1.3"/><path d="M8 8l4-4" stroke="#111" stroke-width="1.2"/><rect x="6.5" y="6.5" width="3" height="3" fill="#1e6cc8"/></svg><svg style="position:absolute;left:6px;top:246px" width="16" height="16" viewBox="0 0 16 16"><path d="M3 6q-2-5 3-4 2-2 5 0 4 0 3 4 3 3-1 6-1 4-5 2-3 3-5-1-3-2-2-5z" fill="#e8ecf2" stroke="#111" stroke-width="1.2"/></svg><svg style="position:absolute;left:6px;top:268px" width="16" height="16" viewBox="0 0 16 16"><path d="M1 13q3-10 7-4t7-6" stroke="#111" stroke-width="1.3" fill="none"/></svg><svg style="position:absolute;left:6px;top:290px" width="16" height="16" viewBox="0 0 16 16"><ellipse cx="8" cy="8" rx="7" ry="4.5" fill="#e8ecf2" stroke="#111" stroke-width="1.4"/><rect x="0" y="6.5" width="3" height="3" fill="#1e6cc8"/><rect x="13" y="6.5" width="3" height="3" fill="#1e6cc8"/></svg><svg style="position:absolute;left:6px;top:312px" width="16" height="16" viewBox="0 0 16 16"><path d="M4 12Q0 8 4 5q5-3 10 0" stroke="#111" stroke-width="1.3" fill="none"/><path d="M6 12q4 1 7-1" stroke="#111" stroke-width="1" stroke-dasharray="1 1" fill="none"/><rect x="2.5" y="10.5" width="3" height="3" fill="#1e6cc8"/></svg><svg style="position:absolute;left:6px;top:334px" width="16" height="16" viewBox="0 0 16 16"><rect x="4.5" y="1.5" width="10" height="10" fill="#d8e4f0" stroke="#1f3f77"/><rect x="1.5" y="4.5" width="8" height="6" fill="#f0e070" stroke="#1f3f77"/><circle cx="9" cy="11" r="3.5" fill="#e0c040" stroke="#1f3f77"/><path d="M12 16l4-4v4z" fill="#111"/></svg><svg style="position:absolute;left:6px;top:356px" width="16" height="16" viewBox="0 0 16 16"><rect x="1.5" y="2.5" width="8" height="6" fill="#f0e070" stroke="#1f3f77"/><circle cx="10" cy="10" r="4" fill="#e0c040" stroke="#1f3f77"/><rect x="1" y="1" width="2" height="2" fill="#1e6cc8"/></svg><svg style="position:absolute;left:6px;top:378px" width="16" height="16" viewBox="0 0 16 16"><rect x="6.5" y="6.5" width="3" height="3" fill="#1e6cc8"/></svg><svg style="position:absolute;left:6px;top:400px" width="16" height="16" viewBox="0 0 16 16"><rect x="2.5" y="2.5" width="11" height="11" fill="#b8d4ee" stroke="#1f3f77"/><path d="M3 8l5-5M3 13L13 3M8 13l5-5M3 3l10 10" stroke="#1f3f77" stroke-width=".8"/><path d="M0 2.5h16M0 13.5h16M2.5 0v16M13.5 0v16" stroke="#1f3f77" stroke-width="1"/></svg><svg style="position:absolute;left:6px;top:422px" width="16" height="16" viewBox="0 0 16 16"><rect x="2" y="2" width="12" height="12" fill="#4a5a68"/><rect x="4" y="4" width="8" height="8" fill="#8a9060"/><path d="M0 2.5h16M0 13.5h16M2.5 0v16M13.5 0v16" stroke="#111" stroke-width="1.2"/></svg><svg style="position:absolute;left:6px;top:444px" width="16" height="16" viewBox="0 0 16 16"><path d="M1.5 2.5h8l5 6v5h-13z" fill="#d8e4f0" stroke="#1f3f77" stroke-width="1.2"/><circle cx="7" cy="8" r="2.5" fill="#fff" stroke="#1f3f77" stroke-width="1.2"/></svg><svg style="position:absolute;left:6px;top:466px" width="16" height="16" viewBox="0 0 16 16"><rect x="1.5" y="2.5" width="13" height="11" fill="#b8d0f4" stroke="#3a6ad0"/><path d="M1.5 5.5h13" stroke="#3a6ad0" stroke-width="2"/><path d="M1 8.5h14M1 11h14M5.5 5v9M9.5 5v9" stroke="#fff"/></svg><svg style="position:absolute;left:6px;top:488px" width="16" height="16" viewBox="0 0 16 16"><text x="1" y="15" font-size="17" font-family="Liberation Sans" fill="#111">A</text></svg><div style="position:absolute;left:27px;top:79px;width:25px;height:390px;border-right:1px solid #a0a0a0;border-bottom:1px solid #a0a0a0;border-left:1px solid #fff;box-sizing:border-box"></div><div style="position:absolute;left:30px;top:81px;width:19px;height:1px;background:#ffffff"></div><div style="position:absolute;left:30px;top:82px;width:19px;height:1px;background:#a8a8a8"></div><div style="position:absolute;left:30px;top:85px;width:19px;height:1px;background:#ffffff"></div><div style="position:absolute;left:30px;top:86px;width:19px;height:1px;background:#a8a8a8"></div><svg style="position:absolute;left:31px;top:92px" width="16" height="16" viewBox="0 0 16 16"><path d="M1 15h15" stroke="#222"/><path d="M5 13l9-10 2 2-9 10z" fill="#f0c840"/><path d="M3 11l3-3 2 3-2 3z" fill="#e08080" stroke="#a05050" stroke-width=".5"/></svg><svg style="position:absolute;left:31px;top:114px" width="16" height="16" viewBox="0 0 16 16"><circle cx="5" cy="5" r="4" fill="#e8ecf2" stroke="#222" stroke-width="1.2"/><circle cx="10" cy="12" r="4" fill="#d8dee8" stroke="#222" stroke-width="1.2"/><path d="M8 2q6 0 5 5" stroke="#1f3f77" stroke-width="1.5" fill="none"/><path d="M11 6l2 3 2-3z" fill="#1f3f77"/></svg><svg style="position:absolute;left:31px;top:136px" width="16" height="16" viewBox="0 0 16 16"><path d="M6.5 3v12H1z" fill="#fff" stroke="#222" stroke-width="1.2"/><path d="M9.5 3v12H15z" fill="#fff" stroke="#222" stroke-width="1.2"/><path d="M8 0v16" stroke="#1e6cc8" stroke-width="1.3"/></svg><svg style="position:absolute;left:31px;top:158px" width="16" height="16" viewBox="0 0 16 16"><path d="M2 15V10q0-2 2-2h2V4q0-3 3-3t3 3v4h3" stroke="#222" stroke-width="1.3" fill="none"/><path d="M4 13v-2h4V4q0-1 1-1t1 1v6h5v3z" fill="none" stroke="#1e6cc8" stroke-width="1.5"/></svg><svg style="position:absolute;left:31px;top:180px" width="16" height="16" viewBox="0 0 16 16"><g fill="#e8ecf2" stroke="#222" stroke-width="1.2"><rect x="1.5" y="1.5" width="5" height="5"/><rect x="9.5" y="1.5" width="5" height="5"/><rect x="1.5" y="9.5" width="5" height="5"/><rect x="9.5" y="9.5" width="5" height="5"/></g></svg><svg style="position:absolute;left:31px;top:202px" width="16" height="16" viewBox="0 0 16 16"><path d="M8 0l3 3H9v4h4V5l3 3-3 3V9H9v4h2l-3 3-3-3h2V9H3v2L0 8l3-3v2h4V3H5z" fill="#3a6aa8"/></svg><svg style="position:absolute;left:31px;top:224px" width="16" height="16" viewBox="0 0 16 16"><path d="M4 3.5A6 6 0 1 0 9 2" stroke="#3a6aa8" stroke-width="2.5" fill="none"/><path d="M1 1h6v6z" fill="#3a6aa8"/></svg><svg style="position:absolute;left:31px;top:246px" width="16" height="16" viewBox="0 0 16 16"><rect x="2.5" y="2.5" width="12" height="12" fill="#d8e4f0" stroke="#555"/><rect x="1" y="7" width="8" height="8" fill="none" stroke="#111" stroke-dasharray="1 1"/></svg><svg style="position:absolute;left:31px;top:268px" width="16" height="16" viewBox="0 0 16 16"><path d="M2 1.5h4l8 13H2z" fill="#d8e4f0" stroke="#111" stroke-width="1.2"/><path d="M5.5 1v14" stroke="#111" stroke-dasharray="1 1"/></svg><svg style="position:absolute;left:31px;top:290px" width="16" height="16" viewBox="0 0 16 16"><path d="M1 8h3M6 8h2" stroke="#1e6cc8" stroke-width="1.3"/><path d="M10 14L15 2" stroke="#111" stroke-width="1.3"/><path d="M11 8h4" stroke="#111" stroke-dasharray="1 1"/></svg><svg style="position:absolute;left:31px;top:312px" width="16" height="16" viewBox="0 0 16 16"><path d="M1 8h3M6 8h2" stroke="#1e6cc8" stroke-width="1.3" stroke-dasharray="2 1"/><path d="M10 14L15 2" stroke="#111" stroke-width="1.3"/></svg><svg style="position:absolute;left:31px;top:334px" width="16" height="16" viewBox="0 0 16 16"><path d="M2 4.5h12v10H2z" fill="#d8e4f0" stroke="#111" stroke-width="1.2"/><path d="M2 3V2h1" stroke="#111"/></svg><svg style="position:absolute;left:31px;top:356px" width="16" height="16" viewBox="0 0 16 16"><path d="M2 3h3M11 3h3v2M14 11v3h-3M5 14H2v-3" stroke="#111" stroke-width="1.2" fill="none"/><path d="M2.5 4.5h11v9h-11z" fill="#d8e4f0" stroke="#111" stroke-width="1.2"/></svg><svg style="position:absolute;left:31px;top:378px" width="16" height="16" viewBox="0 0 16 16"><path d="M0 8h16" stroke="#1f3f77" stroke-width="1.5"/><path d="M1 5l6 3-6 3zM15 5L9 8l6 3z" fill="#1f3f77"/></svg><svg style="position:absolute;left:31px;top:400px" width="16" height="16" viewBox="0 0 16 16"><path d="M2 15V7l6-6h7" stroke="#111" stroke-width="1.4" fill="none"/><path d="M2 7V1h6" stroke="#555" stroke-dasharray="1 1" fill="none"/></svg><svg style="position:absolute;left:31px;top:422px" width="16" height="16" viewBox="0 0 16 16"><path d="M2 15V9q0-8 8-8h5" stroke="#1e6cc8" stroke-width="1.8" fill="none"/><path d="M2 7V1h6" stroke="#555" stroke-dasharray="1 1" fill="none"/></svg><svg style="position:absolute;left:31px;top:444px" width="16" height="16" viewBox="0 0 16 16"><path d="M3 8l5-5 4 4-5 5z" fill="#e02020"/><path d="M9 3l5-2M12 6l3 1M4 12l-2 3" stroke="#f0a020" stroke-width="1.5"/><circle cx="6" cy="10" r="2" fill="#f0c020"/></svg><div style="position:absolute;left:27px;top:470px;width:25px;height:205px;border-right:1px solid #a0a0a0;border-bottom:1px solid #a0a0a0;border-left:1px solid #fff;border-top:1px solid #fff;box-sizing:border-box"></div><div style="position:absolute;left:30px;top:473px;width:19px;height:1px;background:#ffffff"></div><div style="position:absolute;left:30px;top:474px;width:19px;height:1px;background:#a8a8a8"></div><div style="position:absolute;left:30px;top:477px;width:19px;height:1px;background:#ffffff"></div><div style="position:absolute;left:30px;top:478px;width:19px;height:1px;background:#a8a8a8"></div><svg style="position:absolute;left:31px;top:483px" width="16" height="16" viewBox="0 0 16 16"><rect x="1.5" y="1.5" width="10" height="8" fill="#5a82b8" stroke="#2a4a80"/><rect x="4.5" y="5.5" width="10" height="9" fill="#a8c4e4" stroke="#2a4a80"/></svg><div style="position:absolute;left:30px;top:505px;width:19px;height:1px;background:#a0a0a0"></div><div style="position:absolute;left:30px;top:506px;width:19px;height:1px;background:#ffffff"></div><svg style="position:absolute;left:31px;top:512px" width="16" height="16" viewBox="0 0 16 16"><rect x="1.5" y="3.5" width="12" height="11" fill="#b8d4ee" stroke="#1f3f77" stroke-width="1.5"/><path d="M2 10l6-6M2 14L12 4M7 14l6-6" stroke="#fff" stroke-width="1"/><path d="M15 1l-9 12" stroke="#d8a020" stroke-width="3"/><path d="M6 13l-2 2 3-1z" fill="#222"/><path d="M15 1l-1.5 2" stroke="#d08080" stroke-width="3"/></svg><svg style="position:absolute;left:31px;top:534px" width="16" height="16" viewBox="0 0 16 16"><path d="M13 2L4 13" stroke="#d8a020" stroke-width="3"/><path d="M13 2l-1.5 2" stroke="#d08080" stroke-width="3"/><path d="M3 15l1-3 2 2zM3 15h9q3 0 3-3t-3-3" stroke="#222" stroke-width="1.2" fill="none"/></svg><svg style="position:absolute;left:31px;top:556px" width="16" height="16" viewBox="0 0 16 16"><path d="M11 3L3 13" stroke="#d8a020" stroke-width="3"/><path d="M11 3l-1.5 2" stroke="#d08080" stroke-width="3"/><path d="M1 15q3-6 8-4t6-7" stroke="#222" stroke-width="1.3" fill="none"/></svg><div style="position:absolute;left:30px;top:577px;width:19px;height:1px;background:#a0a0a0"></div><div style="position:absolute;left:30px;top:578px;width:19px;height:1px;background:#ffffff"></div><svg style="position:absolute;left:31px;top:584px" width="16" height="16" viewBox="0 0 16 16"><path d="M2 3l7 0 6 6-6 6-7-7z" fill="#d8e8f8" stroke="#4a7ab8" stroke-width="1.2"/><circle cx="4" cy="5" r="1" fill="#4a7ab8"/><path d="M14 1L7 11" stroke="#d8a020" stroke-width="3"/><path d="M14 1l-1.2 2" stroke="#d08080" stroke-width="3"/></svg><svg style="position:absolute;left:31px;top:606px" width="16" height="16" viewBox="0 0 16 16"><path d="M2 8l5-5 4 4-5 5z" fill="#d8e8f8" stroke="#4a7ab8" stroke-width="1.2"/><path d="M11 1L4 11" stroke="#d8a020" stroke-width="3"/><circle cx="11" cy="12" r="3.5" fill="#e8d870" stroke="#1f3f77"/></svg><svg style="position:absolute;left:31px;top:628px" width="16" height="16" viewBox="0 0 16 16"><path d="M2 3l7 0 6 6-6 6-7-7z" fill="#d8e8f8" stroke="#4a7ab8" stroke-width="1.2"/><circle cx="4" cy="5" r="1" fill="#4a7ab8"/><path d="M6 11v-3h3" stroke="#1e6cc8" stroke-width="1.3" fill="none"/><path d="M9 8l3 3" stroke="#555"/></svg><svg style="position:absolute;left:31px;top:650px" width="16" height="16" viewBox="0 0 16 16"><path d="M6 7l5 -2 5 5-5 5-5-5z" fill="#d8e8f8" stroke="#4a7ab8" stroke-width="1.2"/><path d="M1 3q4-2 8 1l1 4-5 1z" fill="#c09090"/><path d="M2 11l4 4" stroke="#222"/><path d="M2 11h2v2" stroke="#222" fill="none"/></svg><div style="position:absolute;left:53px;top:78px;width:1582px;height:2px;background:#6d6d6d"></div><div style="position:absolute;left:53px;top:78px;width:2px;height:742px;background:#6d6d6d"></div><div style="position:absolute;left:55px;top:80px;width:1560px;height:723px;background:#000"></div><svg style="position:absolute;left:0;top:0" width="1636" height="826" viewBox="0 0 1636 826" shape-rendering="crispEdges"><rect x="146" y="187" width="1073" height="1" fill="#ff0000"/><path d="M146.00 195.50 L146.26 195.50 L149.56 198.50 L156.86 198.50 L160.40 195.50 L160.40 195.50 L167.70 195.50 L171.00 198.50 L178.30 198.50 L181.84 195.50 L181.84 195.50 L189.14 195.50 L192.44 198.50 L199.74 198.50 L203.27 195.50 L203.27 195.50 L210.57 195.50 L213.87 198.50 L221.17 198.50 L224.71 195.50 L224.71 195.50 L232.01 195.50 L235.31 198.50 L242.61 198.50 L246.15 195.50 L246.15 195.50 L253.45 195.50 L256.75 198.50 L264.05 198.50 L267.59 195.50 L267.59 195.50 L274.89 195.50 L278.19 198.50 L285.49 198.50 L289.02 195.50 L289.02 195.50 L296.32 195.50 L299.62 198.50 L306.92 198.50 L310.46 195.50 L310.46 195.50 L317.76 195.50 L321.06 198.50 L328.36 198.50 L331.90 195.50 L331.90 195.50 L339.20 195.50 L342.50 198.50 L349.80 198.50 L353.33 195.50 L353.33 195.50 L360.63 195.50 L363.93 198.50 L371.23 198.50 L374.77 195.50 L374.77 195.50 L382.07 195.50 L385.37 198.50 L392.67 198.50 L396.21 195.50 L396.21 195.50 L403.51 195.50 L406.81 198.50 L414.11 198.50 L417.64 195.50 L417.64 195.50 L424.94 195.50 L428.24 198.50 L435.54 198.50 L439.08 195.50 L439.08 195.50 L446.38 195.50 L449.68 198.50 L456.98 198.50 L460.52 195.50 L460.52 195.50 L467.82 195.50 L471.12 198.50 L478.42 198.50 L481.96 195.50 L481.96 195.50 L489.26 195.50 L492.56 198.50 L499.86 198.50 L503.39 195.50 L503.39 195.50 L510.69 195.50 L513.99 198.50 L521.29 198.50 L524.83 195.50 L524.83 195.50 L532.13 195.50 L535.43 198.50 L542.73 198.50 L546.27 195.50 L546.27 195.50 L553.57 195.50 L556.87 198.50 L564.17 198.50 L567.70 195.50 L567.70 195.50 L575.00 195.50 L578.30 198.50 L585.60 198.50 L589.14 195.50 L589.14 195.50 L596.44 195.50 L599.74 198.50 L607.04 198.50 L610.58 195.50 L610.58 195.50 L617.88 195.50 L621.18 198.50 L628.48 198.50 L632.01 195.50 L632.01 195.50 L639.31 195.50 L642.61 198.50 L649.91 198.50 L653.45 195.50 L653.45 195.50 L660.75 195.50 L664.05 198.50 L671.35 198.50 L674.89 195.50 L674.89 195.50 L682.19 195.50 L685.49 198.50 L692.79 198.50 L696.33 195.50 L696.33 195.50 L703.62 195.50 L706.93 198.50 L714.23 198.50 L717.76 195.50 L717.76 195.50 L725.06 195.50 L728.36 198.50 L735.66 198.50 L739.20 195.50 L739.20 195.50 L746.50 195.50 L749.80 198.50 L757.10 198.50 L760.64 195.50 L760.64 195.50 L767.94 195.50 L771.24 198.50 L778.54 198.50 L782.07 195.50 L782.07 195.50 L789.37 195.50 L792.67 198.50 L799.97 198.50 L803.51 195.50 L803.51 195.50 L810.81 195.50 L814.11 198.50 L821.41 198.50 L824.95 195.50 L824.95 195.50 L832.25 195.50 L835.55 198.50 L842.85 198.50 L846.38 195.50 L846.38 195.50 L853.68 195.50 L856.98 198.50 L864.28 198.50 L867.82 195.50 L867.82 195.50 L875.12 195.50 L878.42 198.50 L885.72 198.50 L889.26 195.50 L889.26 195.50 L896.56 195.50 L899.86 198.50 L907.16 198.50 L910.70 195.50 L910.70 195.50 L918.00 195.50 L921.30 198.50 L928.60 198.50 L932.13 195.50 L932.13 195.50 L939.43 195.50 L942.73 198.50 L950.03 198.50 L953.57 195.50 L953.57 195.50 L960.87 195.50 L964.17 198.50 L971.47 198.50 L975.01 195.50 L975.01 195.50 L982.31 195.50 L985.61 198.50 L992.91 198.50 L996.44 195.50 L996.44 195.50 L1003.74 195.50 L1007.04 198.50 L1014.34 198.50 L1017.88 195.50 L1017.88 195.50 L1025.18 195.50 L1028.48 198.50 L1035.78 198.50 L1039.32 195.50 L1039.32 195.50 L1046.62 195.50 L1049.92 198.50 L1057.22 198.50 L1060.75 195.50 L1060.75 195.50 L1068.05 195.50 L1071.35 198.50 L1078.65 198.50 L1082.19 195.50 L1082.19 195.50 L1089.49 195.50 L1092.79 198.50 L1100.09 198.50 L1103.63 195.50 L1103.63 195.50 L1110.93 195.50 L1114.23 198.50 L1121.53 198.50 L1125.07 195.50 L1125.07 195.50 L1132.37 195.50 L1135.66 198.50 L1142.97 198.50 L1146.50 195.50 L1146.50 195.50 L1153.80 195.50 L1157.10 198.50 L1164.40 198.50 L1167.94 195.50 L1167.94 195.50 L1175.24 195.50 L1178.54 198.50 L1185.84 198.50 L1189.38 195.50 L1189.38 195.50 L1196.68 195.50 L1199.98 198.50 L1207.28 198.50 L1210.81 195.50 L1210.81 195.50 L1218.00 195.50" stroke="#ff0000" stroke-width="1" fill="none" /><rect x="160" y="222" width="1045" height="2" fill="#ffffff"/><rect x="146" y="187" width="1" height="69" fill="#ff0000"/><rect x="1218" y="187" width="1" height="69" fill="#ff0000"/><rect x="160" y="195" width="1" height="61" fill="#ff0000"/><rect x="1204" y="195" width="1" height="61" fill="#ff0000"/><rect x="146" y="255" width="1" height="87" fill="#00ffff"/><rect x="155" y="255" width="6" height="1" fill="#00ffff"/><rect x="155" y="341" width="6" height="1" fill="#00ffff"/><rect x="155" y="255" width="1" height="87" fill="#00ffff"/><rect x="160" y="255" width="1" height="87" fill="#00ffff"/><rect x="155" y="259" width="6" height="1" fill="#00ffff"/><rect x="155" y="337" width="6" height="1" fill="#00ffff"/><rect x="157" y="259" width="2" height="79" fill="#00ffff"/><rect x="146" y="255" width="10" height="1" fill="#ff0000"/><rect x="146" y="341" width="10" height="1" fill="#ff0000"/><rect x="146" y="341" width="1" height="109" fill="#ff0000"/><rect x="160" y="341" width="1" height="109" fill="#ff0000"/><rect x="146" y="449" width="15" height="1" fill="#ff0000"/><rect x="1218" y="255" width="1" height="87" fill="#00ffff"/><rect x="1204" y="255" width="6" height="1" fill="#00ffff"/><rect x="1204" y="341" width="6" height="1" fill="#00ffff"/><rect x="1204" y="255" width="1" height="87" fill="#00ffff"/><rect x="1209" y="255" width="1" height="87" fill="#00ffff"/><rect x="1204" y="259" width="6" height="1" fill="#00ffff"/><rect x="1204" y="337" width="6" height="1" fill="#00ffff"/><rect x="1206" y="259" width="2" height="79" fill="#00ffff"/><rect x="1209" y="255" width="10" height="1" fill="#ff0000"/><rect x="1209" y="341" width="10" height="1" fill="#ff0000"/><rect x="1204" y="341" width="1" height="174" fill="#ff0000"/><rect x="1218" y="341" width="1" height="174" fill="#ff0000"/><rect x="446" y="224" width="1" height="41" fill="#ff0000"/><rect x="453" y="224" width="1" height="41" fill="#ff0000"/><rect x="446" y="264" width="8" height="1" fill="#ff0000"/><rect x="446" y="264" width="1" height="150" fill="#00ffff"/><rect x="453" y="264" width="1" height="150" fill="#00ffff"/><rect x="446" y="268" width="8" height="1" fill="#00ffff"/><rect x="449" y="268" width="1" height="146" fill="#00ffff"/><rect x="231" y="255" width="144" height="1" fill="#00ffff"/><rect x="231" y="255" width="1" height="87" fill="#00ffff"/><rect x="374" y="255" width="1" height="87" fill="#00ffff"/><rect x="231" y="341" width="144" height="1" fill="#00ffff"/><rect x="235" y="259" width="137" height="1" fill="#00ffff"/><rect x="235" y="338" width="137" height="1" fill="#00ffff"/><rect x="235" y="259" width="1" height="80" fill="#00ffff"/><rect x="371" y="259" width="1" height="80" fill="#00ffff"/><rect x="301" y="259" width="1" height="80" fill="#00ffff"/><rect x="305" y="259" width="1" height="80" fill="#00ffff"/><rect x="238" y="261" width="62" height="1" fill="#00ffff"/><rect x="238" y="335" width="62" height="1" fill="#00ffff"/><rect x="238" y="261" width="1" height="75" fill="#00ffff"/><rect x="299" y="261" width="1" height="75" fill="#00ffff"/><rect x="307" y="261" width="63" height="1" fill="#00ffff"/><rect x="307" y="335" width="63" height="1" fill="#00ffff"/><rect x="307" y="261" width="1" height="75" fill="#00ffff"/><rect x="369" y="261" width="1" height="75" fill="#00ffff"/><rect x="575" y="255" width="215" height="1" fill="#00ffff"/><rect x="575" y="255" width="1" height="87" fill="#00ffff"/><rect x="789" y="255" width="1" height="87" fill="#00ffff"/><rect x="575" y="341" width="215" height="1" fill="#00ffff"/><rect x="578" y="259" width="209" height="1" fill="#00ffff"/><rect x="578" y="338" width="209" height="1" fill="#00ffff"/><rect x="578" y="259" width="1" height="80" fill="#00ffff"/><rect x="786" y="259" width="1" height="80" fill="#00ffff"/><rect x="645" y="259" width="1" height="80" fill="#00ffff"/><rect x="649" y="259" width="1" height="80" fill="#00ffff"/><rect x="715" y="259" width="1" height="80" fill="#00ffff"/><rect x="719" y="259" width="1" height="80" fill="#00ffff"/><rect x="581" y="261" width="63" height="1" fill="#00ffff"/><rect x="581" y="335" width="63" height="1" fill="#00ffff"/><rect x="581" y="261" width="1" height="75" fill="#00ffff"/><rect x="643" y="261" width="1" height="75" fill="#00ffff"/><rect x="651" y="261" width="63" height="1" fill="#00ffff"/><rect x="651" y="335" width="63" height="1" fill="#00ffff"/><rect x="651" y="261" width="1" height="75" fill="#00ffff"/><rect x="713" y="261" width="1" height="75" fill="#00ffff"/><rect x="721" y="261" width="63" height="1" fill="#00ffff"/><rect x="721" y="335" width="63" height="1" fill="#00ffff"/><rect x="721" y="261" width="1" height="75" fill="#00ffff"/><rect x="783" y="261" width="1" height="75" fill="#00ffff"/><rect x="861" y="255" width="215" height="1" fill="#00ffff"/><rect x="861" y="255" width="1" height="87" fill="#00ffff"/><rect x="1075" y="255" width="1" height="87" fill="#00ffff"/><rect x="861" y="341" width="215" height="1" fill="#00ffff"/><rect x="864" y="259" width="209" height="1" fill="#00ffff"/><rect x="864" y="338" width="209" height="1" fill="#00ffff"/><rect x="864" y="259" width="1" height="80" fill="#00ffff"/><rect x="1072" y="259" width="1" height="80" fill="#00ffff"/><rect x="931" y="259" width="1" height="80" fill="#00ffff"/><rect x="935" y="259" width="1" height="80" fill="#00ffff"/><rect x="1001" y="259" width="1" height="80" fill="#00ffff"/><rect x="1005" y="259" width="1" height="80" fill="#00ffff"/><rect x="867" y="261" width="63" height="1" fill="#00ffff"/><rect x="867" y="335" width="63" height="1" fill="#00ffff"/><rect x="867" y="261" width="1" height="75" fill="#00ffff"/><rect x="929" y="261" width="1" height="75" fill="#00ffff"/><rect x="937" y="261" width="63" height="1" fill="#00ffff"/><rect x="937" y="335" width="63" height="1" fill="#00ffff"/><rect x="937" y="261" width="1" height="75" fill="#00ffff"/><rect x="999" y="261" width="1" height="75" fill="#00ffff"/><rect x="1007" y="261" width="63" height="1" fill="#00ffff"/><rect x="1007" y="335" width="63" height="1" fill="#00ffff"/><rect x="1007" y="261" width="1" height="75" fill="#00ffff"/><rect x="1069" y="261" width="1" height="75" fill="#00ffff"/><rect x="872" y="449" width="204" height="1" fill="#00ffff"/><rect x="872" y="506" width="204" height="1" fill="#00ffff"/><rect x="1075" y="449" width="1" height="58" fill="#00ffff"/><rect x="872" y="452" width="201" height="1" fill="#00ffff"/><rect x="872" y="502" width="201" height="1" fill="#00ffff"/><rect x="1072" y="452" width="1" height="51" fill="#00ffff"/><rect x="931" y="452" width="1" height="51" fill="#00ffff"/><rect x="935" y="452" width="1" height="51" fill="#00ffff"/><rect x="1001" y="452" width="1" height="51" fill="#00ffff"/><rect x="1005" y="452" width="1" height="51" fill="#00ffff"/><rect x="872" y="455" width="58" height="1" fill="#00ffff"/><rect x="872" y="500" width="58" height="1" fill="#00ffff"/><rect x="929" y="455" width="1" height="46" fill="#00ffff"/><rect x="937" y="455" width="63" height="1" fill="#00ffff"/><rect x="937" y="500" width="63" height="1" fill="#00ffff"/><rect x="999" y="455" width="1" height="46" fill="#00ffff"/><rect x="937" y="455" width="1" height="46" fill="#00ffff"/><rect x="1007" y="455" width="63" height="1" fill="#00ffff"/><rect x="1007" y="500" width="63" height="1" fill="#00ffff"/><rect x="1069" y="455" width="1" height="46" fill="#00ffff"/><rect x="1007" y="455" width="1" height="46" fill="#00ffff"/><rect x="146" y="413" width="401" height="1" fill="#ff0000"/><rect x="804" y="413" width="415" height="1" fill="#ff0000"/><path d="M146.00 420.50 L146.26 420.50 L149.56 423.50 L156.86 423.50 L160.40 420.50 L160.40 420.50 L167.70 420.50 L171.00 423.50 L178.30 423.50 L181.84 420.50 L181.84 420.50 L189.14 420.50 L192.44 423.50 L199.74 423.50 L203.27 420.50 L203.27 420.50 L210.57 420.50 L213.87 423.50 L221.17 423.50 L224.71 420.50 L224.71 420.50 L232.01 420.50 L235.31 423.50 L242.61 423.50 L246.15 420.50 L246.15 420.50 L253.45 420.50 L256.75 423.50 L264.05 423.50 L267.59 420.50 L267.59 420.50 L274.89 420.50 L278.19 423.50 L285.49 423.50 L289.02 420.50 L289.02 420.50 L296.32 420.50 L299.62 423.50 L306.92 423.50 L310.46 420.50 L310.46 420.50 L317.76 420.50 L321.06 423.50 L328.36 423.50 L331.90 420.50 L331.90 420.50 L339.20 420.50 L342.50 423.50 L349.80 423.50 L353.33 420.50 L353.33 420.50 L360.63 420.50 L363.93 423.50 L371.23 423.50 L374.77 420.50 L374.77 420.50 L382.07 420.50 L385.37 423.50 L392.67 423.50 L396.21 420.50 L396.21 420.50 L403.51 420.50 L406.81 423.50 L414.11 423.50 L417.64 420.50 L417.64 420.50 L424.94 420.50 L428.24 423.50 L435.54 423.50 L439.08 420.50 L439.08 420.50 L446.38 420.50 L449.68 423.50 L456.98 423.50 L460.52 420.50 L460.52 420.50 L467.82 420.50 L471.12 423.50 L478.42 423.50 L481.96 420.50 L481.96 420.50 L489.26 420.50 L492.56 423.50 L499.86 423.50 L503.39 420.50 L503.39 420.50 L510.69 420.50 L513.99 423.50 L521.29 423.50 L524.83 420.50 L524.83 420.50 L532.13 420.50 L535.43 423.50 L542.73 423.50 L546.00 420.73" stroke="#ff0000" stroke-width="1" fill="none" /><path d="M804.00 420.50 L804.06 420.50 L807.36 423.50 L814.66 423.50 L818.20 420.50 L818.20 420.50 L825.50 420.50 L828.80 423.50 L836.10 423.50 L839.64 420.50 L839.64 420.50 L846.94 420.50 L850.24 423.50 L857.54 423.50 L861.07 420.50 L861.07 420.50 L868.37 420.50 L871.67 423.50 L878.97 423.50 L882.51 420.50 L882.51 420.50 L889.81 420.50 L893.11 423.50 L900.41 423.50 L903.95 420.50 L903.95 420.50 L911.25 420.50 L914.55 423.50 L921.85 423.50 L925.39 420.50 L925.38 420.50 L932.68 420.50 L935.99 423.50 L943.28 423.50 L946.82 420.50 L946.82 420.50 L954.12 420.50 L957.42 423.50 L964.72 423.50 L968.26 420.50 L968.26 420.50 L975.56 420.50 L978.86 423.50 L986.16 423.50 L989.70 420.50 L989.70 420.50 L997.00 420.50 L1000.30 423.50 L1007.60 423.50 L1011.13 420.50 L1011.13 420.50 L1018.43 420.50 L1021.73 423.50 L1029.03 423.50 L1032.57 420.50 L1032.57 420.50 L1039.87 420.50 L1043.17 423.50 L1050.47 423.50 L1054.01 420.50 L1054.01 420.50 L1061.31 420.50 L1064.61 423.50 L1071.91 423.50 L1075.44 420.50 L1075.44 420.50 L1082.74 420.50 L1086.04 423.50 L1093.34 423.50 L1096.88 420.50 L1096.88 420.50 L1104.18 420.50 L1107.48 423.50 L1114.78 423.50 L1118.32 420.50 L1118.32 420.50 L1125.62 420.50 L1128.92 423.50 L1136.22 423.50 L1139.75 420.50 L1139.76 420.50 L1147.06 420.50 L1150.36 423.50 L1157.66 423.50 L1161.19 420.50 L1161.19 420.50 L1168.49 420.50 L1171.79 423.50 L1179.09 423.50 L1182.63 420.50 L1182.63 420.50 L1189.93 420.50 L1193.23 423.50 L1200.53 423.50 L1204.07 420.50 L1204.07 420.50 L1211.37 420.50 L1214.67 423.50 L1218.00 423.50" stroke="#ff0000" stroke-width="1" fill="none" /><rect x="546" y="413" width="1" height="9" fill="#ff0000"/><rect x="160" y="413" width="1" height="37" fill="#ff0000"/><path d="M546.50 421.50 L505.00 447.50" stroke="#ffffff" stroke-width="1" fill="none" /><path d="M547.00 424.50 L507.00 449.50" stroke="#ffffff" stroke-width="1" fill="none" /><rect x="161" y="447" width="345" height="1" fill="#ffffff"/><rect x="161" y="449" width="345" height="1" fill="#ffffff"/><rect x="786" y="447" width="419" height="1" fill="#ffffff"/><rect x="785" y="449" width="80" height="1" fill="#ffffff"/><rect x="1076" y="449" width="129" height="1" fill="#ffffff"/><rect x="505" y="449" width="256" height="1" fill="#00ffff"/><path d="M146.00 431.50 L124.50 431.50 L124.50 432.50 L102.50 432.50 L102.50 435.50 L124.50 435.50 L124.50 434.50 L146.00 434.50" stroke="#ff0000" stroke-width="1" fill="none" /><rect x="135" y="663" width="1095" height="1" fill="#ff0000"/><rect x="135" y="674" width="1095" height="1" fill="#ff0000"/><rect x="146" y="449" width="1" height="215" fill="#00ffff"/><rect x="189" y="449" width="1" height="215" fill="#00ffff"/><rect x="194" y="449" width="1" height="215" fill="#00ffff"/><rect x="191" y="453" width="1" height="51" fill="#00ffff"/><rect x="193" y="453" width="1" height="51" fill="#00ffff"/><rect x="189" y="453" width="6" height="1" fill="#00ffff"/><rect x="189" y="503" width="6" height="1" fill="#00ffff"/><rect x="189" y="506" width="6" height="1" fill="#00ffff"/><rect x="189" y="509" width="6" height="1" fill="#00ffff"/><rect x="191" y="509" width="1" height="134" fill="#00ffff"/><rect x="193" y="509" width="1" height="134" fill="#00ffff"/><rect x="189" y="642" width="6" height="1" fill="#00ffff"/><rect x="189" y="645" width="6" height="1" fill="#00ffff"/><rect x="189" y="660" width="6" height="1" fill="#00ffff"/><rect x="183" y="590" width="7" height="1" fill="#00ffff"/><rect x="183" y="593" width="7" height="1" fill="#00ffff"/><rect x="183" y="590" width="1" height="4" fill="#00ffff"/><rect x="189" y="590" width="1" height="4" fill="#00ffff"/><rect x="367" y="514" width="73" height="1" fill="#00ffff"/><rect x="367" y="514" width="1" height="150" fill="#00ffff"/><rect x="439" y="514" width="1" height="113" fill="#00ffff"/><rect x="439" y="650" width="1" height="14" fill="#00ffff"/><rect x="371" y="518" width="65" height="1" fill="#00ffff"/><rect x="371" y="518" width="1" height="146" fill="#00ffff"/><rect x="435" y="518" width="1" height="121" fill="#00ffff"/><rect x="435" y="652" width="1" height="12" fill="#00ffff"/><rect x="373" y="591" width="11" height="2" fill="#00ffff"/><rect x="373" y="589" width="2" height="7" fill="#00ffff"/><rect x="671" y="514" width="64" height="1" fill="#00ffff"/><rect x="671" y="514" width="1" height="150" fill="#00ffff"/><rect x="734" y="514" width="1" height="150" fill="#00ffff"/><rect x="674" y="518" width="58" height="1" fill="#00ffff"/><rect x="674" y="518" width="1" height="146" fill="#00ffff"/><rect x="731" y="518" width="1" height="146" fill="#00ffff"/><rect x="676" y="591" width="11" height="2" fill="#00ffff"/><rect x="676" y="589" width="2" height="7" fill="#00ffff"/><rect x="739" y="475" width="1" height="40" fill="#ff0000"/><rect x="746" y="471" width="1" height="44" fill="#ff0000"/><rect x="739" y="514" width="8" height="1" fill="#ff0000"/><rect x="739" y="514" width="1" height="150" fill="#00ffff"/><rect x="746" y="514" width="1" height="150" fill="#00ffff"/><rect x="744" y="518" width="1" height="146" fill="#00ffff"/><rect x="739" y="518" width="8" height="1" fill="#00ffff"/><rect x="864" y="449" width="1" height="215" fill="#ff0000"/><rect x="872" y="449" width="1" height="215" fill="#ff0000"/><rect x="1204" y="514" width="1" height="150" fill="#00ffff"/><rect x="1218" y="514" width="1" height="150" fill="#00ffff"/><rect x="1207" y="518" width="1" height="146" fill="#00ffff"/><rect x="1211" y="514" width="1" height="150" fill="#00ffff"/><rect x="1204" y="518" width="8" height="1" fill="#00ffff"/><rect x="1204" y="514" width="15" height="1" fill="#ff0000"/><path d="M396.5 663.5 L396.5 650.5 L417.5 650.5 L417.5 638.5 L439.5 638.5 L439.5 626.5 L460.5 626.5 L460.5 613.5 L482.5 613.5 L482.5 600.5 L503.5 600.5 L503.5 588.5 L525.5 588.5 L525.5 576.5 L546.5 576.5 L546.5 563.5 L568.5 563.5 L568.5 550.5 L589.5 550.5 L589.5 538.5 L611.5 538.5 L611.5 526.5 L632.5 526.5 L632.5 513.5 L654.5 513.5 L654.5 500.5 L675.5 500.5 L675.5 488.5 L697.5 488.5 L697.5 476.5 L718.5 476.5 L718.5 463.5 L740.5 463.5 L740.5 450.5 L761.5 450.5 L761.5 438.5 L783.5 438.5 L783.5 426.5 L804.5 426.5 L804.5 413.5" stroke="#ff0000" stroke-width="1" fill="none" shape-rendering="crispEdges"/><path d="M417.50 663.50 L828.00 423.50" stroke="#ff0000" stroke-width="1" fill="none" /><rect x="540" y="341" width="270" height="1" fill="#ffffff"/><rect x="544" y="344" width="261" height="1" fill="#ffffff"/><rect x="540" y="341" width="1" height="73" fill="#ffffff"/><rect x="544" y="344" width="1" height="70" fill="#ffffff"/><rect x="546" y="413" width="259" height="1" fill="#ffffff"/><rect x="545" y="353" width="259" height="2" fill="#ffffff"/><rect x="545" y="363" width="259" height="2" fill="#ffffff"/><rect x="545" y="373" width="259" height="2" fill="#ffffff"/><rect x="545" y="383" width="259" height="2" fill="#ffffff"/><rect x="545" y="393" width="259" height="2" fill="#ffffff"/><rect x="545" y="403" width="259" height="2" fill="#ffffff"/><rect x="589" y="344" width="2" height="70" fill="#ffffff"/><rect x="696" y="344" width="2" height="70" fill="#ffffff"/><rect x="540" y="341" width="5" height="4" fill="#fff"/><rect x="542" y="342" width="1" height="1" fill="#000"/><rect x="803" y="344" width="2" height="70" fill="#ffffff"/><path d="M808 341.5 h1 l1.5 1.5 l-1.5 1.5 h-1" stroke="#ffffff" stroke-width="1" fill="none" /><rect x="396" y="582" width="1" height="70" fill="#ffffff"/><rect x="503" y="519" width="2" height="70" fill="#ffffff"/><rect x="610" y="457" width="2" height="70" fill="#ffffff"/><rect x="718" y="394" width="2" height="70" fill="#ffffff"/><path d="M393.00 580.50 L803.00 341.50" stroke="#ffffff" stroke-width="1" fill="none" /><path d="M396.00 583.50 L803.00 344.50" stroke="#ffffff" stroke-width="1" fill="none" /><path d="M393 580.5 q-2 2 1 3" stroke="#ffffff" stroke-width="1" fill="none" /><path d="M397.00 591.00 L803.00 355.00" stroke="#ffffff" stroke-width="2" fill="none" /><path d="M397.00 601.20 L803.00 365.00" stroke="#ffffff" stroke-width="2" fill="none" /><path d="M397.00 611.40 L803.00 375.00" stroke="#ffffff" stroke-width="2" fill="none" /><path d="M397.00 621.60 L803.00 385.00" stroke="#ffffff" stroke-width="2" fill="none" /><path d="M397.00 631.80 L803.00 395.00" stroke="#ffffff" stroke-width="2" fill="none" /><path d="M397.00 642.00 L803.00 405.00" stroke="#ffffff" stroke-width="2" fill="none" /><path d="M673.00 172.00 L692.00 172.00 L682.50 187.50 L673.00 172.00" stroke="#ffff00" stroke-width="1.2" fill="none" /><path d="M667.50 165.50 L673.45 165.50" stroke="#ffff00" stroke-width="1" fill="none" /><path d="M670.48 162.00 L670.48 169.00" stroke="#ffff00" stroke-width="1" fill="none" /><path d="M681.17 161.00 L680.33 160.50 L678.20 160.50 L676.92 162.00 L676.50 164.50 L676.50 168.50 L677.35 169.50 L680.75 169.50 L681.60 168.50 L681.60 165.50 L680.75 164.50 L677.35 164.50 L676.50 165.50" stroke="#ffff00" stroke-width="1" fill="none" /><path d="M684.77 168.50 L684.77 169.50 L683.92 170.50" stroke="#ffff00" stroke-width="1" fill="none" /><path d="M691.17 161.00 L690.33 160.50 L688.20 160.50 L686.92 162.00 L686.50 164.50 L686.50 168.50 L687.35 169.50 L690.75 169.50 L691.60 168.50 L691.60 165.50 L690.75 164.50 L687.35 164.50 L686.50 165.50" stroke="#ffff00" stroke-width="1" fill="none" /><path d="M698.60 160.50 L693.92 160.50 L693.50 164.50 L694.35 164.00 L697.75 164.00 L698.60 165.00 L698.60 168.50 L697.75 169.50 L694.35 169.50 L693.50 168.50" stroke="#ffff00" stroke-width="1" fill="none" /><path d="M957.50 397.50 L976.50 397.50 L967.00 413.00 L957.50 397.50" stroke="#ffff00" stroke-width="1.2" fill="none" /><path d="M952.50 390.94 L958.45 390.94" stroke="#ffff00" stroke-width="1" fill="none" /><path d="M955.48 387.83 L955.48 394.06" stroke="#ffff00" stroke-width="1" fill="none" /><path d="M960.50 387.39 L961.35 386.50 L964.75 386.50 L965.60 387.39 L965.60 389.61 L964.75 390.50 L962.20 390.50" stroke="#ffff00" stroke-width="1" fill="none" /><path d="M964.75 390.50 L965.60 391.39 L965.60 393.61 L964.75 394.50 L961.35 394.50 L960.50 393.61" stroke="#ffff00" stroke-width="1" fill="none" /><path d="M968.35 394.06 L968.35 394.68" stroke="#ffff00" stroke-width="1" fill="none" /><path d="M975.60 386.50 L970.92 386.50 L970.50 390.06 L971.35 389.61 L974.75 389.61 L975.60 390.50 L975.60 393.61 L974.75 394.50 L971.35 394.50 L970.50 393.61" stroke="#ffff00" stroke-width="1" fill="none" /><path d="M978.35 386.50 L981.75 386.50 L982.60 387.83 L982.60 393.17 L981.75 394.50 L978.35 394.50 L977.50 393.17 L977.50 387.83 L978.35 386.50" stroke="#ffff00" stroke-width="1" fill="none" /><path d="M616.00 647.50 L635.00 647.50 L625.50 663.00 L616.00 647.50" stroke="#ffff00" stroke-width="1.2" fill="none" /><path d="M608.50 638.81 L614.45 638.81" stroke="#ffff00" stroke-width="1" fill="none" /><path d="M611.48 635.50 L611.48 642.11" stroke="#ffff00" stroke-width="1" fill="none" /><path d="M608.50 644.00 L614.45 644.00" stroke="#ffff00" stroke-width="1" fill="none" /><path d="M618.35 635.50 L621.75 635.50 L622.60 636.92 L622.60 642.58 L621.75 644.00 L618.35 644.00 L617.50 642.58 L617.50 636.92 L618.35 635.50" stroke="#ffff00" stroke-width="1" fill="none" /><path d="M625.77 643.06 L625.77 644.00 L624.92 644.94" stroke="#ffff00" stroke-width="1" fill="none" /><path d="M628.35 635.50 L631.75 635.50 L632.60 636.92 L632.60 642.58 L631.75 644.00 L628.35 644.00 L627.50 642.58 L627.50 636.92 L628.35 635.50" stroke="#ffff00" stroke-width="1" fill="none" /><path d="M635.35 635.50 L638.75 635.50 L639.60 636.92 L639.60 642.58 L638.75 644.00 L635.35 644.00 L634.50 642.58 L634.50 636.92 L635.35 635.50" stroke="#ffff00" stroke-width="1" fill="none" /><path d="M289.20 553.80 L289.20 546.30 L292.50 541.40 L297.00 540.30 L303.80 541.40 L306.00 543.30 L307.90 547.00 L305.30 548.50 L304.50 551.50 L304.90 554.50 L302.30 557.50 L299.30 559.80" stroke="#ffff00" stroke-width="1" fill="none" /><path d="M289.20 555.30 L295.50 559.80 L299.30 566.50" stroke="#ffff00" stroke-width="1" fill="none" /><path d="M289.20 556.00 L285.00 559.00 L282.00 562.80 L279.00 566.50 L277.50 572.50 L276.80 580.80 L275.30 589.00 L274.20 593.00" stroke="#ffff00" stroke-width="1" fill="none" /><path d="M286.50 560.50 L280.50 569.50 L279.00 577.00 L279.80 586.00 L285.00 589.80 L291.00 592.00 L297.00 593.50 L303.00 595.00 L303.80 589.80 L298.50 587.50 L291.80 586.80 L287.30 582.30 L288.80 575.50 L289.50 566.50" stroke="#ffff00" stroke-width="1" fill="none" /><path d="M297.80 560.50 L297.80 583.00 L296.30 586.80" stroke="#ffff00" stroke-width="1" fill="none" /><path d="M274.50 592.80 L282.00 595.00 L292.50 597.30 L296.30 593.50" stroke="#ffff00" stroke-width="1" fill="none" /><path d="M275.00 592.80 L272.20 595.50 L270.80 602.00 L272.20 605.70 L272.70 620.40 L269.90 625.00 L267.60 626.80 L247.40 647.10 L243.70 648.90 L243.70 651.70 L246.40 655.40 L248.70 657.20 L251.00 662.70 L256.60 663.20 L257.00 660.90 L252.90 658.10 L254.70 655.80 L257.50 656.30 L262.10 650.80 L272.20 639.70 L280.50 631.40 L285.10 625.00 L287.00 616.70 L290.20 611.20 L293.00 602.90 L292.50 597.40" stroke="#ffff00" stroke-width="1" fill="none" /><path d="M280.50 595.50 L279.10 603.80 L277.80 618.50 L274.50 630.50 L262.10 644.30 L253.80 653.50 L248.30 648.00" stroke="#ffff00" stroke-width="1" fill="none" /><path d="M286.00 596.40 L279.60 603.80" stroke="#ffff00" stroke-width="1" fill="none" /><path d="M293.00 602.90 L295.20 604.70 L299.90 617.60 L304.50 636.00 L306.30 647.10 L308.10 654.50 L312.70 657.20 L317.30 658.60 L314.60 661.40 L310.00 660.90 L304.50 663.20 L302.60 663.20 L301.20 658.60 L297.10 658.60 L294.30 646.20 L289.70 633.30 L285.60 625.00" stroke="#ffff00" stroke-width="1" fill="none" /><path d="M290.60 610.30 L295.20 628.70 L302.60 645.20 L307.20 656.30" stroke="#ffff00" stroke-width="1" fill="none" /><path d="M301.20 658.60 L308.10 656.30" stroke="#ffff00" stroke-width="1" fill="none" /><circle cx="295" cy="551" r="1.6" fill="#ffff00"/><circle cx="303" cy="552" r="1.3" fill="#ffff00"/><path d="M815.60 310.50 L817.50 300.00 L820.50 296.30 L826.50 291.40 L835.50 292.10 L842.30 297.00 L843.40 304.50 L842.30 308.30 L846.80 312.40" stroke="#ffff00" stroke-width="1" fill="none" /><path d="M819.80 314.30 L820.90 303.00 L825.80 296.30 L831.80 293.60 L838.50 295.50 L840.80 300.00 L840.00 307.50 L843.00 312.00" stroke="#ffff00" stroke-width="1" fill="none" /><path d="M822.80 308.30 L827.30 300.00 L832.50 297.80 L837.80 300.00 L836.30 306.80 L832.50 310.50 L828.00 309.80 L825.00 312.00" stroke="#ffff00" stroke-width="1" fill="none" /><path d="M828.00 302.00 L831.00 301.00" stroke="#ffff00" stroke-width="1" fill="none" /><path d="M834.00 303.00 L834.00 305.00" stroke="#ffff00" stroke-width="1" fill="none" /><path d="M816.80 315.00 L816.00 328.50 L816.40 333.80 L821.30 334.50 L824.30 327.00" stroke="#ffff00" stroke-width="1" fill="none" /><path d="M817.50 315.00 L834.00 325.50 L843.00 312.80" stroke="#ffff00" stroke-width="1" fill="none" /><path d="M819.00 314.00 L830.00 311.00 L844.50 312.80 L849.00 327.00 L850.50 333.00 L843.80 330.00 L843.00 340.50" stroke="#ffff00" stroke-width="1" fill="none" /><path d="M820.50 339.00 L841.50 342.00 L842.30 345.00 L820.50 345.00 L820.50 339.00" stroke="#ffff00" stroke-width="1" fill="none" /><path d="M815.60 330.00 L814.80 342.20 L815.60 361.80 L818.10 366.70 L821.30 365.10 L820.50 353.70 L820.50 345.00" stroke="#ffff00" stroke-width="1" fill="none" /><path d="M850.50 333.00 L850.80 345.50 L849.10 348.80 L845.90 347.10 L845.10 339.00 L843.80 330.00" stroke="#ffff00" stroke-width="1" fill="none" /><path d="M820.50 345.00 L819.70 353.70 L821.30 368.40 L826.30 386.40 L822.20 394.50 L823.80 399.40 L829.50 406.80 L830.30 413.30 L836.90 413.30 L836.10 399.40 L835.20 379.80 L842.30 345.00" stroke="#ffff00" stroke-width="1" fill="none" /><path d="M826.00 348.00 L831.00 354.00" stroke="#ffff00" stroke-width="1" fill="none" /><path d="M834.40 356.00 L832.80 366.70 L835.20 379.80" stroke="#ffff00" stroke-width="1" fill="none" /><path d="M826.30 386.40 L829.00 395.00 L833.00 400.00" stroke="#ffff00" stroke-width="1" fill="none" /><path d="M830.00 405.00 L836.00 405.00" stroke="#ffff00" stroke-width="1" fill="none" /><circle cx="818" cy="364" r="2" fill="#ffff00"/><circle cx="848" cy="347" r="2" fill="#ffff00"/><path d="M595.00 756.00 L593.00 753.50 L586.50 753.50 L584.50 756.00 L584.50 759.00 L586.50 760.50 L593.00 760.50 L595.00 762.00 L595.00 765.00 L593.00 767.50 L586.50 767.50 L584.50 765.00" stroke="#ff00ff" stroke-width="1" fill="none" /><path d="M609.00 753.50 L599.50 753.50 L599.50 767.50 L609.00 767.50" stroke="#ff00ff" stroke-width="1" fill="none" /><path d="M599.50 760.50 L606.50 760.50" stroke="#ff00ff" stroke-width="1" fill="none" /><path d="M623.00 756.00 L620.50 753.50 L615.00 753.50 L612.50 756.50 L612.50 764.50 L615.00 767.50 L620.50 767.50 L623.00 765.00" stroke="#ff00ff" stroke-width="1" fill="none" /><path d="M637.00 756.00 L634.50 753.50 L629.00 753.50 L626.50 756.50 L626.50 764.50 L629.00 767.50 L634.50 767.50 L637.00 765.00" stroke="#ff00ff" stroke-width="1" fill="none" /><path d="M641.50 753.50 L641.50 767.50" stroke="#ff00ff" stroke-width="1" fill="none" /><path d="M649.00 753.50 L654.50 753.50 L657.00 756.50 L657.00 764.50 L654.50 767.50 L649.00 767.50 L646.50 764.50 L646.50 756.50 L649.00 753.50" stroke="#ff00ff" stroke-width="1" fill="none" /><path d="M661.50 767.50 L661.50 753.50 L672.00 767.50 L672.00 753.50" stroke="#ff00ff" stroke-width="1" fill="none" /><path d="M693.00 753.50 L698.50 753.50 L701.00 756.50 L701.00 764.50 L698.50 767.50 L693.00 767.50 L690.50 764.50 L690.50 756.50 L693.00 753.50" stroke="#ff00ff" stroke-width="1" fill="none" /><path d="M714.00 753.50 L705.50 753.50 L705.50 767.50" stroke="#ff00ff" stroke-width="1" fill="none" /><path d="M705.50 760.50 L712.00 760.50" stroke="#ff00ff" stroke-width="1" fill="none" /><path d="M718.50 753.50 L718.50 767.50" stroke="#ff00ff" stroke-width="1" fill="none" /><path d="M733.50 756.00 L731.00 753.50 L725.50 753.50 L723.00 756.50 L723.00 764.50 L725.50 767.50 L731.00 767.50 L733.50 765.00" stroke="#ff00ff" stroke-width="1" fill="none" /><path d="M738.50 753.50 L738.50 767.50" stroke="#ff00ff" stroke-width="1" fill="none" /><path d="M742.50 767.50 L742.50 753.50 L753.00 767.50 L753.00 753.50" stroke="#ff00ff" stroke-width="1" fill="none" /><path d="M756.00 767.50 L761.25 753.50 L766.50 767.50" stroke="#ff00ff" stroke-width="1" fill="none" /><path d="M758.20 762.50 L764.30 762.50" stroke="#ff00ff" stroke-width="1" fill="none" /><path d="M780.00 756.00 L778.00 753.50 L771.50 753.50 L769.50 756.00 L769.50 759.00 L771.50 760.50 L778.00 760.50 L780.00 762.00 L780.00 765.00 L778.00 767.50 L771.50 767.50 L769.50 765.00" stroke="#ff00ff" stroke-width="1" fill="none" /></svg><div style="position:absolute;left:1615px;top:80px;width:19px;height:723px;background:#f0f0f0"></div><div style="position:absolute;left:1615px;top:80px;width:1px;height:723px;background:#e8e8e8"></div><svg style="position:absolute;left:1621px;top:88px" width="8" height="4" viewBox="0 0 8 4"><path d="M0 4L4 0l4 4z" fill="#444"/></svg><svg style="position:absolute;left:1621px;top:792px" width="8" height="4" viewBox="0 0 8 4"><path d="M0 0h8L4 4z" fill="#444"/></svg><div style="position:absolute;left:1616px;top:284px;width:17px;height:18px;background:linear-gradient(#f4f4f4,#dcdcdc);border:1px solid #999;border-radius:2px;box-sizing:border-box"></div><div style="position:absolute;left:55px;top:803px;width:1579px;height:16px;background:#f0f0f0"></div><div style="position:absolute;left:55px;top:803px;width:1030px;height:1px;background:#fff"></div><div style="position:absolute;left:56px;top:804px;width:15px;height:14px;background:#f0f0f0;border:1px solid #b0b0b0;box-sizing:border-box"></div><div style="position:absolute;left:71px;top:804px;width:15px;height:14px;background:#f0f0f0;border:1px solid #b0b0b0;box-sizing:border-box"></div><div style="position:absolute;left:86px;top:804px;width:15px;height:14px;background:#f0f0f0;border:1px solid #b0b0b0;box-sizing:border-box"></div><div style="position:absolute;left:101px;top:804px;width:15px;height:14px;background:#f0f0f0;border:1px solid #b0b0b0;box-sizing:border-box"></div><svg style="position:absolute;left:59px;top:806px" width="10" height="10" viewBox="0 0 10 10"><path d="M1 0v10" stroke="#555" stroke-width="1.2"/><path d="M8 1L3 5l5 4z" fill="#555"/></svg><svg style="position:absolute;left:74px;top:806px" width="10" height="10" viewBox="0 0 10 10"><path d="M7 1L2 5l5 4z" fill="#555"/></svg><svg style="position:absolute;left:89px;top:806px" width="10" height="10" viewBox="0 0 10 10"><path d="M3 1l5 4-5 4z" fill="#555"/></svg><svg style="position:absolute;left:104px;top:806px" width="10" height="10" viewBox="0 0 10 10"><path d="M9 0v10" stroke="#555" stroke-width="1.2"/><path d="M2 1l5 4-5 4z" fill="#555"/></svg><svg style="position:absolute;left:116px;top:803px" width="150" height="16" viewBox="0 0 150 16"><path d="M0 0l4 15h51l4-15z" fill="#000"/><path d="M59 0l-4 15h87l4-15" fill="none" stroke="#888"/></svg><div style="position:absolute;left:127px;top:805px;font-size:12px;color:#fff;white-space:nowrap;line-height:1;transform:scaleX(0.87);transform-origin:0 0;">Modelo</div><div style="position:absolute;left:179px;top:805px;font-size:12px;color:#000;white-space:nowrap;line-height:1;transform:scaleX(0.9);transform-origin:0 0;">PLANTA BAJA</div><div style="position:absolute;left:1084px;top:803px;width:6px;height:16px;background:#fff;border:1px solid #aaa;border-radius:2px;box-sizing:border-box"></div><div style="position:absolute;left:1090px;top:804px;width:525px;height:15px;background:#e8e8e8"></div><svg style="position:absolute;left:1095px;top:807px" width="5" height="8" viewBox="0 0 5 8"><path d="M5 0v8L0 4z" fill="#333"/></svg><svg style="position:absolute;left:1604px;top:807px" width="5" height="8" viewBox="0 0 5 8"><path d="M0 0v8l5-4z" fill="#333"/></svg><div style="position:absolute;left:1536px;top:804px;width:15px;height:14px;background:linear-gradient(#f4f4f4 50%,#d8d8d8 50%);border:1px solid #888;border-radius:2px;box-sizing:border-box"></div><div style="position:absolute;left:1px;top:819px;width:1633px;height:1px;background:#f0f0f0"></div><div style="position:absolute;left:1px;top:820px;width:1633px;height:2px;background:#ffffff"></div><div style="position:absolute;left:1px;top:822px;width:1633px;height:3px;background:#f0f0f0"></div><div style="position:absolute;left:1px;top:825px;width:1633px;height:1px;background:#a0a0a0"></div><div style="position:absolute;left:1257px;top:182px;width:345px;height:260px;background:linear-gradient(#bccbdc 0px,#d3e0ee 30px,#d6e2ef 260px);border:1px solid #6e7e90;border-radius:6px 6px 0 0;box-sizing:border-box;box-shadow:inset 0 0 0 1px #e8f0f8"></div><svg style="position:absolute;left:1265px;top:190px" width="18" height="18" viewBox="0 0 18 18"><path d="M8 1.5h2v4.5h6.5v2.5l-6.5 1.5v4h2.5v2h-6.5v-2h2.5v-4l-6.5-1.5v-2.5h6.5z" fill="#fff" stroke="#111" stroke-width="1.1"/></svg><div style="position:absolute;left:1286px;top:193px;font-size:12px;color:#3a3a48;white-space:nowrap;line-height:1;transform:scaleX(0.96);transform-origin:0 0;">Vista aérea - D:\Documentos de MIKE...</div><div style="position:absolute;left:1496px;top:191px;width:30px;height:17px;background:linear-gradient(#e0e8f2,#c8d4e2);border:1px solid #7f8fa4;border-radius:3px;box-sizing:border-box"></div><div style="position:absolute;left:1506px;top:201px;width:10px;height:3px;background:#fff;border:1px solid #333;border-radius:1px"></div><div style="position:absolute;left:1529px;top:191px;width:30px;height:17px;background:linear-gradient(#e0e8f2,#c8d4e2);border:1px solid #7f8fa4;border-radius:3px;box-sizing:border-box"></div><div style="position:absolute;left:1539px;top:195px;width:10px;height:8px;background:#fff;border:1px solid #333;box-sizing:border-box;box-shadow:inset 0 0 0 2px #fff, inset 0 0 0 3px #333"></div><div style="position:absolute;left:1562px;top:191px;width:30px;height:17px;background:linear-gradient(#e0e8f2,#c8d4e2);border:1px solid #7f8fa4;border-radius:3px;box-sizing:border-box"></div><svg style="position:absolute;left:1572px;top:195px" width="11" height="10" viewBox="0 0 11 10"><path d="M1.5 1.5l8 7M9.5 1.5l-8 7" stroke="#333" stroke-width="3"/><path d="M1.5 1.5l8 7M9.5 1.5l-8 7" stroke="#fff" stroke-width="1.4"/></svg><div style="position:absolute;left:1264px;top:211px;width:331px;height:19px;background:linear-gradient(#f8f9fc 0px,#f0f2f8 6px,#d9ddef 8px,#dde2f2 19px)"></div><div style="position:absolute;left:1264px;top:229px;width:331px;height:1px;background:#b8bccc"></div><div style="position:absolute;left:1271px;top:215px;font-size:12px;color:#555;white-space:nowrap;line-height:1;">Ver</div><div style="position:absolute;left:1302px;top:215px;font-size:12px;color:#555;white-space:nowrap;line-height:1;">Opciones</div><div style="position:absolute;left:1366px;top:215px;font-size:12px;color:#555;white-space:nowrap;line-height:1;">Ayuda</div><div style="position:absolute;left:1264px;top:232px;width:331px;height:29px;background:#000"></div><div style="position:absolute;left:1270px;top:236px;width:319px;height:22px;background:#eeeeee"></div><div style="position:absolute;left:1477px;top:232px;width:8px;height:3px;background:#a8c8e8"></div><div style="position:absolute;left:1477px;top:258px;width:8px;height:3px;background:#a8c8e8"></div><svg style="position:absolute;left:1272px;top:239px" width="17" height="17" viewBox="0 0 17 17"><circle cx="6.5" cy="6.5" r="5.3" fill="#fff" stroke="#111" stroke-width="1.5"/><path d="M10 10l5 5" stroke="#111" stroke-width="2.2"/><path d="M6.5 3.5v6M3.5 6.5h6" stroke="#a00" stroke-width="1.8"/></svg><svg style="position:absolute;left:1295px;top:239px" width="17" height="17" viewBox="0 0 17 17"><circle cx="6.5" cy="6.5" r="5.3" fill="#f4f4f4" stroke="#aaa" stroke-width="1.5"/><path d="M10 10l5 5" stroke="#aaa" stroke-width="2.2"/><path d="M3.5 6.5h6" stroke="#aaa" stroke-width="1.8"/></svg><svg style="position:absolute;left:1318px;top:239px" width="17" height="17" viewBox="0 0 17 17"><circle cx="7" cy="7" r="5.8" fill="#fff" stroke="#111" stroke-width="1.5"/><path d="M10.5 10.5l5 5" stroke="#111" stroke-width="2.2"/><path d="M7 2.5v9M2.5 7h9" stroke="#a00" stroke-width="1.2"/></svg><div style="position:absolute;left:1270px;top:259px;width:46px;height:2px;background:#00e0e0"></div><div style="position:absolute;left:1266px;top:260px;width:1px;height:1px;background:#fff"></div><div style="position:absolute;left:1318px;top:259px;width:28px;height:2px;background:#e8e8e8"></div><div style="position:absolute;left:1323px;top:259px;width:3px;height:1px;background:#e0d040"></div><div style="position:absolute;left:1331px;top:259px;width:4px;height:1px;background:#4060e0"></div><div style="position:absolute;left:1340px;top:259px;width:3px;height:1px;background:#e0d040"></div><div style="position:absolute;left:1265px;top:261px;width:328px;height:2px;background:#808080"></div><div style="position:absolute;left:1265px;top:263px;width:2px;height:171px;background:#808080"></div><div style="position:absolute;left:1267px;top:263px;width:325px;height:170px;background:#000"></div><div style="position:absolute;left:1592px;top:261px;width:2px;height:173px;background:#fff"></div><div style="position:absolute;left:1265px;top:433px;width:329px;height:2px;background:#fff"></div><div style="position:absolute;left:1403px;top:314px;width:80px;height:38px;background:#fff"></div><div style="position:absolute;left:1407px;top:318px;width:72px;height:30px;background:#000"></div><svg style="position:absolute;left:0;top:0" width="1636" height="826" viewBox="0 0 1636 826"><rect x="1407" y="318.5" width="56" height="2" fill="#ff0000"/><rect x="1407" y="343" width="56" height="2" fill="#ff0000"/><rect x="1407" y="319" width="2" height="26" fill="#ff0000"/><rect x="1461" y="319" width="2" height="26" fill="#ff0000"/><rect x="1408" y="331" width="55" height="1.5" fill="#ff0000"/><rect x="1409" y="321" width="52" height="1" fill="#fff"/><rect x="1409" y="333" width="52" height="1" fill="#fff"/><rect x="1412" y="323" width="8" height="4.5" fill="#00ffff"/><rect x="1413.5" y="324" width="2.0" height="2.5" fill="#000"/><rect x="1416.5" y="324" width="2.0" height="2.5" fill="#000"/><rect x="1429" y="323" width="12" height="4.5" fill="#00ffff"/><rect x="1430.5" y="324" width="2.3333333333333335" height="2.5" fill="#000"/><rect x="1433.8333333333333" y="324" width="2.3333333333333335" height="2.5" fill="#000"/><rect x="1437.1666666666667" y="324" width="2.3333333333333335" height="2.5" fill="#000"/><rect x="1444" y="323" width="11" height="4.5" fill="#00ffff"/><rect x="1445.5" y="324" width="2.0" height="2.5" fill="#000"/><rect x="1448.5" y="324" width="2.0" height="2.5" fill="#000"/><rect x="1451.5" y="324" width="2.0" height="2.5" fill="#000"/><rect x="1444" y="334" width="11" height="3.5" fill="#00ffff"/><rect x="1445.4" y="335" width="2.5" height="1.5" fill="#000"/><rect x="1448.7" y="335" width="2.5" height="1.5" fill="#000"/><rect x="1452.0" y="335" width="2.5" height="1.5" fill="#000"/><rect x="1407" y="322" width="1.5" height="6" fill="#00ffff"/><rect x="1461" y="322" width="1.5" height="6" fill="#00ffff"/><rect x="1423" y="322" width="1" height="10" fill="#00ffff"/><rect x="1407" y="335" width="1.5" height="8" fill="#00ffff"/><rect x="1461" y="336" width="1.5" height="6" fill="#00ffff"/><rect x="1409" y="334" width="1.5" height="10" fill="#00ffff"/><rect x="1420" y="336" width="3" height="8" fill="#00ffff"/><rect x="1434" y="336" width="3" height="8" fill="#00ffff"/><rect x="1443" y="333" width="1" height="10" fill="#ff0000"/><rect x="1404" y="332" width="4" height="1" fill="#00ffff"/><path d="M1427 327.5H1442V331.5H1427z" fill="#fff"/><path d="M1420 344L1443 328V331L1425 344z" fill="#fff"/><path d="M1424 337L1431 332" stroke="#fff" stroke-width="2"/><path d="M1423 344L1444 330" stroke="#ff0000" stroke-width="1"/><rect x="1441" y="325" width="3" height="5" fill="#ffff00"/><rect x="1413" y="338" width="2" height="6" fill="#ffff00"/><rect x="1412" y="342" width="4" height="1.5" fill="#ffff00"/><rect x="1448" y="329" width="2" height="2" fill="#ffff00"/><rect x="1431" y="342" width="2" height="2" fill="#ffff00"/><rect x="1435" y="318" width="2" height="1.5" fill="#ffff00"/><rect x="1430" y="348" width="10" height="1.5" fill="#00ff00"/></svg>
</div></body></html>
